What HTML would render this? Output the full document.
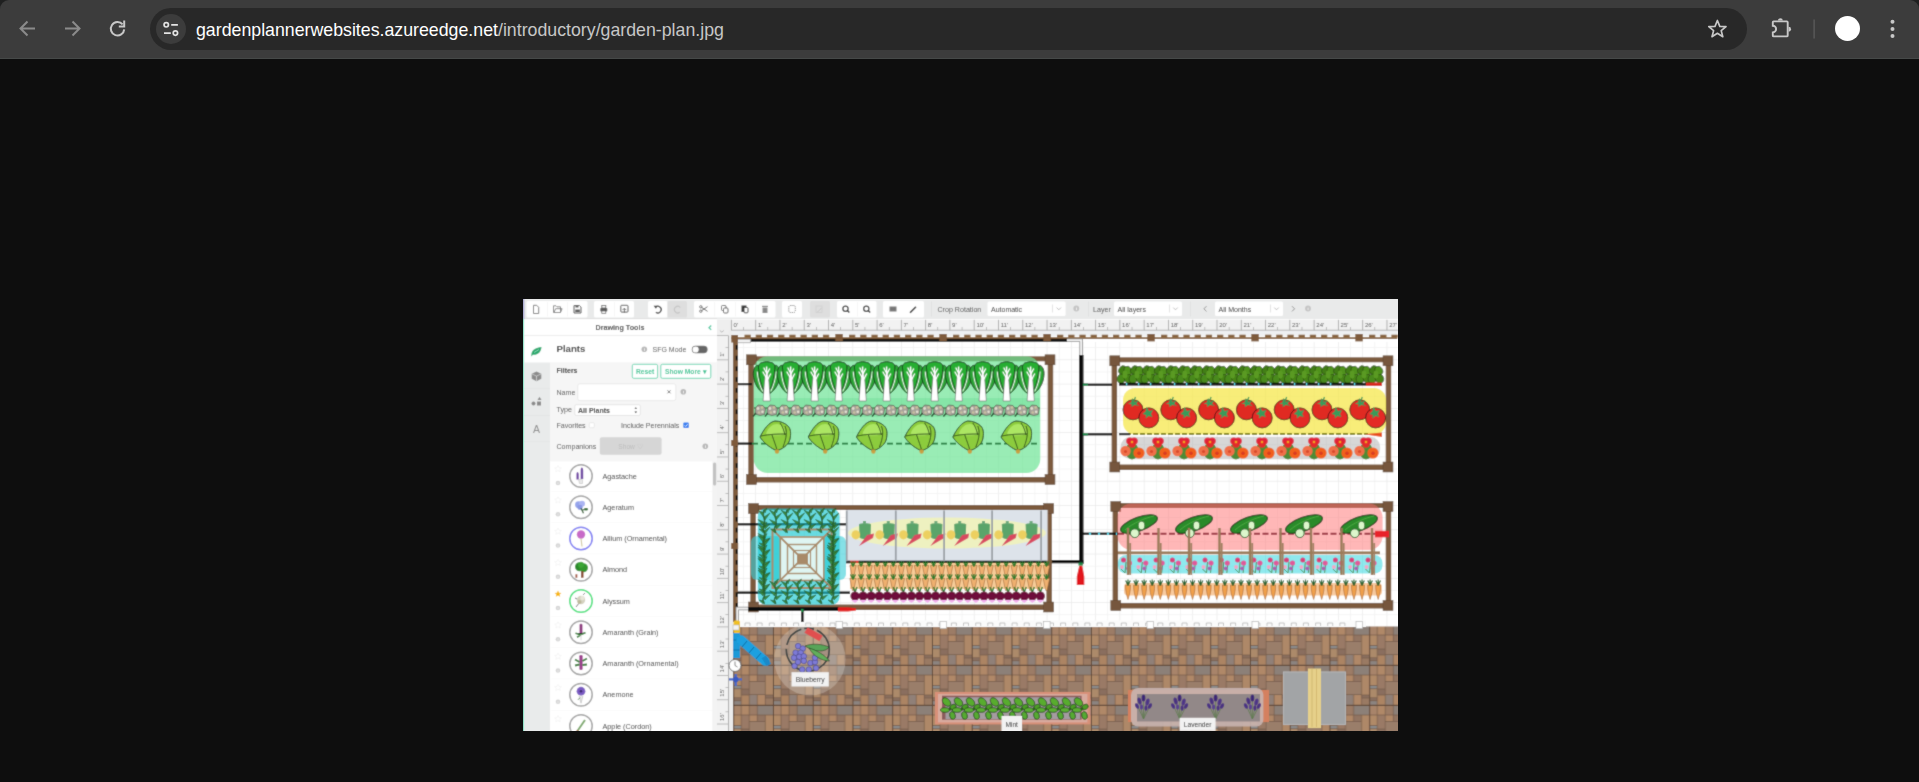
<!DOCTYPE html>
<html><head><meta charset="utf-8">
<style>
*{margin:0;padding:0;box-sizing:border-box}
html,body{width:1919px;height:782px;overflow:hidden;background:#0e0e0e;font-family:"Liberation Sans",sans-serif}
.abs{position:absolute}
#chrome{position:absolute;left:0;top:0;width:1919px;height:59px;background:#3c3c3c}
#omni{position:absolute;left:150px;top:8px;width:1597px;height:42px;border-radius:21px;background:#282828}
#url{position:absolute;left:196px;top:19.5px;font-size:17.75px;color:#fff;white-space:nowrap;letter-spacing:0}
#url span{color:#c7c7c7}
#img{position:absolute;left:523px;top:299px;width:875px;height:432px;background:#fff;overflow:hidden}

.t{position:absolute;white-space:nowrap;color:#333;font-size:8px}
</style></head><body>

<div id="chrome">
  <svg class="abs" style="left:0;top:0" width="1919" height="59">
    <path d="M0 0H9A9 9 0 0 0 0 9Z" fill="#1f2020"/>
    <path d="M1919 0H1910A9 9 0 0 1 1919 9Z" fill="#1f2020"/>
  </svg>
  <div id="omni"></div>
  <svg class="abs" style="left:0;top:0" width="1919" height="59">
    <!-- back -->
    <g stroke="#8b8b8b" stroke-width="2" fill="none">
      <path d="M20.5 28.5H35M27.5 21.5L20.5 28.5L27.5 35.5"/>
      <path d="M65 28.5H79.5M72.5 21.5L79.5 28.5L72.5 35.5"/>
    </g>
    <!-- reload -->
    <path d="M122.6 24.4A6.7 6.7 0 1 0 124.2 29.3" fill="none" stroke="#c8c8c8" stroke-width="2"/>
    <path d="M118.8 26.4H124.2V20.6" fill="none" stroke="#c8c8c8" stroke-width="2"/>
    <circle cx="171" cy="29" r="15" fill="#3c3c3c"/>
    <g stroke="#e3e3e3" stroke-width="1.7" fill="none">
      <circle cx="166.25" cy="24.8" r="2.2"/>
      <path d="M171.2 24.8H177.9M164 33.1H170.8"/>
      <circle cx="175.4" cy="33.1" r="2.2"/>
    </g>
    <!-- star -->
    <path d="M1717.4 20.5L1719.8 26.3L1726 26.6L1721.2 30.6L1722.8 36.7L1717.4 33.3L1712 36.7L1713.6 30.6L1708.8 26.6L1715 26.3Z" fill="none" stroke="#c8c8c8" stroke-width="1.7" stroke-linejoin="round"/>
    <!-- puzzle -->
    <path d="M1773.5 21.4H1786.8Q1787.7 21.4 1787.7 22.3V35.5Q1787.7 36.4 1786.8 36.4H1773.7Q1772.8 36.4 1772.8 35.5V32.4A3.3 3.3 0 0 0 1772.8 25.8V22.3Q1772.8 21.4 1773.5 21.4Z" fill="none" stroke="#c8c8c8" stroke-width="1.9"/>
    <path d="M1777.9 20.6A2.45 2.45 0 0 1 1782.8 20.6Z" fill="#c8c8c8"/>
    <path d="M1788.6 26.8A2.45 2.45 0 0 1 1788.6 31.7Z" fill="#c8c8c8"/>
    <rect x="1813.5" y="19.5" width="1.2" height="19" fill="#5f5f5f"/>
    <circle cx="1847.5" cy="28.5" r="12.5" fill="#fff"/>
    <g fill="#c8c8c8"><circle cx="1892.5" cy="21.8" r="2"/><circle cx="1892.5" cy="28.9" r="2"/><circle cx="1892.5" cy="35.9" r="2"/></g>
    <rect x="0" y="58" width="1919" height="1" fill="#464948"/>
  </svg>
  <div id="url">gardenplannerwebsites.azureedge.net<span>/introductory/garden-plan.jpg</span></div>
</div>


<div id="img">
<svg width="875" height="432" viewBox="523 299 875 432" style="position:absolute;left:0;top:0" font-family="Liberation Sans, sans-serif">
<filter id="soft" x="523" y="299" width="875" height="432" filterUnits="userSpaceOnUse"><feConvolveMatrix order="3" kernelMatrix="1 3 1 3 16 3 1 3 1" divisor="32" edgeMode="duplicate" preserveAlpha="true"/></filter>
<defs>
<g id="bok">
<path d="M-3 30C-8 27 -12 21 -13 14C-14 9 -13 4 -10 2C-7 1 -4 5 -3 11L-2 22Z" fill="#2aa236" stroke="#143a16" stroke-width="0.9"/>
<path d="M3 30C8 27 12 21 13 14C14 9 13 4 10 2C7 1 4 5 3 11L2 22Z" fill="#2aa236" stroke="#143a16" stroke-width="0.9"/>
<path d="M-8 6C-9 2 -7 -1 -4 -1C-2 -2 2 -2 4 -1C7 -1 9 2 8 6C8 12 6 20 4 25L-4 25C-6 20 -8 12 -8 6Z" fill="#26ae32" stroke="#143a16" stroke-width="0.9"/>
<path d="M-3.6 37.5C-3 30 -2.6 20 -1.5 12L0 7L1.5 12C2.6 20 3 30 3.6 37.5Z" fill="#fff" stroke="#555" stroke-width="0.5"/>
<path d="M0 15L-4 8M0 18L4 10M0 12L0 3M0 10L-3 4M0 11L3 5" stroke="#fff" stroke-width="1.3"/>
<path d="M-9.5 8C-9 15 -7 22 -4 28" stroke="#e6f4e6" stroke-width="1.1" fill="none"/>
<path d="M9.5 8C9 15 7 22 4 28" stroke="#e6f4e6" stroke-width="1.1" fill="none"/>
</g>
<g id="herb">
<path d="M-5 4L-4.5 -2L-2 -5L3 -4.5L5.5 -1L4.5 4.5L0 5.5Z" fill="#a6a29a" stroke="#4a5040" stroke-width="0.6"/>
<circle cx="-2" cy="-1.5" r="1.4" fill="#e0dccc"/><circle cx="2" cy="-2.5" r="1.3" fill="#ccc49a"/><circle cx="-1" cy="2.5" r="1.3" fill="#c8c0a0"/><circle cx="2.5" cy="1.8" r="1.3" fill="#e4e0d0"/>
<path d="M-7 6.5L-4 3" stroke="#24482a" stroke-width="1.3"/>
</g>
<g id="cab">
<path d="M-17 0C-13 -8 -8 -15 -2 -16C3 -16 8 -14 11 -11C14 -8 14 -3 13 2C12 7 7 11 2 13L-2 13C-8 10 -14 5 -17 0Z" fill="#8ccc3c" stroke="#22401a" stroke-width="1"/>
<path d="M-11 -3C-9 -10 -4 -13 0 -13C5 -13 8 -9 9 -3C3 -1 -5 -1 -11 -3Z" fill="#ace664"/>
<path d="M-16 -1C-8 -3 2 -3 9 -3M-5 -2C-3 4 -1 9 0 13M8 -11C10 -6 10 0 6 10M3 -14C6 -10 7 -6 8 -2" stroke="#2a4a18" stroke-width="0.9" fill="none"/>
<circle cx="0" cy="14.5" r="2.2" fill="#c8a040"/>
</g>
<g id="basil">
<ellipse cx="-3.5" cy="5" rx="4.2" ry="5" transform="rotate(25 -3.5 5)" fill="#4a8a1a" stroke="#203a0c" stroke-width="0.5"/>
<ellipse cx="3.5" cy="5" rx="4.2" ry="5" transform="rotate(-25 3.5 5)" fill="#468418" stroke="#203a0c" stroke-width="0.5"/>
<ellipse cx="-2.5" cy="-3.5" rx="3.6" ry="4.5" transform="rotate(30 -2.5 -3.5)" fill="#427e14" stroke="#203a0c" stroke-width="0.5"/>
<ellipse cx="3" cy="-3" rx="3.6" ry="4.5" transform="rotate(-30 3 -3)" fill="#50921e" stroke="#203a0c" stroke-width="0.5"/>
<ellipse cx="0" cy="1" rx="2.5" ry="4" fill="#5a9a22"/>
</g>
<g id="tom">
<circle cx="-7.5" cy="-2.2" r="10" fill="#e02a24" stroke="#4a1010" stroke-width="0.9"/>
<circle cx="8.3" cy="5.9" r="10" fill="#e42c26" stroke="#4a1010" stroke-width="0.9"/>
<path d="M-9.5 -9.5L-8 -14L-6 -10L-2 -12L-4 -8L-1 -6L-6 -7L-9 -5L-9 -8L-13 -8Z" fill="#3a9a5a"/>
<path d="M5 -0.5L6 -5L8.5 -1L12.5 -2L10.5 2L12 5L8 4L5 6.5L5.5 3L2 2Z" fill="#3a9a5a"/>
<path d="M-7 -10L-5 -15" stroke="#3a9a5a" stroke-width="1.2"/>
</g>
<g id="nas">
<ellipse cx="0" cy="4" rx="6.5" ry="8.5" fill="#4e8a34"/>
<circle cx="-2.2" cy="-6" r="3.6" fill="#e0203a"/><circle cx="2.2" cy="-6" r="3.6" fill="#e0203a"/><circle cx="0" cy="-3" r="3.8" fill="#e32a2a"/><circle cx="0" cy="-5" r="1.2" fill="#f0a020"/>
<circle cx="-6.5" cy="4" r="5.2" fill="#f0704a"/><circle cx="-6.5" cy="4.5" r="1.6" fill="#d84a2a"/>
<circle cx="7" cy="6" r="5.6" fill="#f2601e"/><circle cx="7" cy="6.3" r="1.8" fill="#d83a20"/>
</g>
<g id="car">
<path d="M-3.2 3L3.2 3L0.6 15L-0.6 15Z" fill="#f0b070" stroke="#8a5a2a" stroke-width="0.5"/>
<path d="M0 4L-2.5 -1M0 4L2.5 -1M0 4L0 -1.5" stroke="#2a7a2a" stroke-width="1.2"/>
</g>
<g id="car2">
<path d="M-2.4 5C-2.8 10 -1.2 16 0 19.5C1.2 16 2.8 10 2.4 5Z" fill="#f0a04c" stroke="#9a5a24" stroke-width="0.5"/>
<path d="M0 5.5L-2.3 0.5M0 5.5L2.3 0.5M0 5.5L0 -0.5" stroke="#24602a" stroke-width="1.2"/>
</g>
<g id="beet">
<path d="M-2 -4L0 1L2 -4" stroke="#2a7a2a" stroke-width="1.4" fill="none"/>
<circle cx="0" cy="5" r="4.6" fill="#6e0f3a"/>
<path d="M-4 9L4 9L0 12Z" fill="#f3b0ee"/>
</g>
<g id="cuc">
<ellipse cx="0" cy="-2" rx="19.5" ry="7" transform="rotate(-20 0 -2)" fill="#2a8a2a" stroke="#113a14" stroke-width="1"/>
<path d="M-14 4C-6 -3 6 -8 15 -10" stroke="#4aaa40" stroke-width="1" fill="none"/>
<ellipse cx="2.5" cy="-0.5" rx="3.2" ry="4.2" fill="#dcf7cc" stroke="#2a6a2a" stroke-width="0.8"/>
<circle cx="-4.2" cy="7.2" r="4.4" fill="#dcf7cc" stroke="#1e5a22" stroke-width="1"/>
</g>
<g id="flw">
<path d="M-1 9L0 -2M3 9L4 0M-1 9L-5 5" stroke="#4a8a4a" stroke-width="0.9"/>
<circle cx="-2.5" cy="-4" r="2.5" fill="#d8407a"/><circle cx="3.5" cy="-1" r="2.6" fill="#e0589a"/>
<circle cx="-4" cy="3" r="2" fill="#f3a6c6"/><circle cx="2" cy="4.5" r="2" fill="#a860b0"/>
</g>
<g id="mint">
<ellipse cx="-2.5" cy="-6" rx="5" ry="3.3" transform="rotate(45 -2.5 -6)" fill="#58ac2e" stroke="#1c3c14" stroke-width="0.7"/>
<ellipse cx="4" cy="-1" rx="3.5" ry="2.5" transform="rotate(-30 4 -1)" fill="#4e9e28" stroke="#1c3c14" stroke-width="0.7"/>
<ellipse cx="-4" cy="2" rx="4.6" ry="2.3" fill="#5cb032" stroke="#1c3c14" stroke-width="0.7"/>
<ellipse cx="3.5" cy="7.5" rx="2.8" ry="4" transform="rotate(-15 3.5 7.5)" fill="#56aa30" stroke="#1c3c14" stroke-width="0.7"/>
<circle cx="1" cy="1" r="1.5" fill="#2a5a1a"/>
</g>
<g id="lav">
<path d="M0 13L-4 -4M0 13L0 -7M0 13L4 -4M0 13L-6 0M0 13L6 1" stroke="#5a7a4a" stroke-width="0.7"/>
<ellipse cx="-4" cy="-5" rx="1.9" ry="3.6" transform="rotate(-15 -4 -5)" fill="#4a3080"/><ellipse cx="0" cy="-8" rx="1.9" ry="3.6" fill="#3e2876"/>
<ellipse cx="4" cy="-4" rx="1.9" ry="3.6" transform="rotate(15 4 -4)" fill="#4e3486"/><ellipse cx="-6.5" cy="0" rx="1.7" ry="3" transform="rotate(-25 -6.5 0)" fill="#4a3284"/>
<ellipse cx="6.5" cy="0" rx="1.7" ry="3" transform="rotate(25 6.5 0)" fill="#4a3080"/><ellipse cx="-2" cy="1" rx="1.6" ry="2.8" fill="#5a4090"/><ellipse cx="2.5" cy="2" rx="1.6" ry="2.8" fill="#4a3080"/>
</g>
<g id="bean">
<path d="M0 -11C-3 -5 3 -1 0 5C-3 9 1 10 0 12" stroke="#2a6630" stroke-width="1.5" fill="none"/>
<path d="M0 -8L-6 -11L-1 -4.5ZM0 -4L6 -8L1 -1ZM0 1L-6 -1.5L-1 4ZM0 5L6 3L1 8ZM0 9L-5 8L-1 11.5ZM0 -11L3 -13L1 -8Z" fill="#3a8a3c" stroke="#1e4e22" stroke-width="0.5"/>
</g>
<pattern id="pav" x="733.25" y="625" width="39.75" height="40" patternUnits="userSpaceOnUse"><rect width="40" height="40" fill="#745a48"/><rect x="0.35" y="0.35" width="7.3" height="9.3" fill="#a8846a"/><rect x="0.35" y="10.35" width="7.3" height="9.8" fill="#b08a68"/><rect x="0.35" y="20.85" width="7.3" height="2.5999999999999996" fill="#8a8a8a"/><rect x="0.35" y="24.150000000000002" width="7.3" height="8.3" fill="#ac8a6a"/><rect x="0.35" y="33.15" width="7.3" height="2.3" fill="#8a7060"/><rect x="0.35" y="36.15" width="7.3" height="3.5" fill="#8c8480"/><rect x="8.35" y="0.35" width="7.3" height="9.3" fill="#b08868"/><rect x="8.35" y="10.35" width="7.3" height="13.3" fill="#9a7a66"/><rect x="8.35" y="24.35" width="7.3" height="5.3" fill="#8a6e5e"/><rect x="8.35" y="30.35" width="7.3" height="9.3" fill="#ac8464"/><rect x="16.35" y="0.35" width="7.3" height="9.3" fill="#9c7c66"/><rect x="16.35" y="10.35" width="7.3" height="5.7" fill="#b08868"/><rect x="16.35" y="16.75" width="15.3" height="12.600000000000001" fill="#9a7e6a"/><rect x="16.35" y="30.05" width="7.3" height="9.600000000000001" fill="#908078"/><rect x="24.35" y="0.35" width="15.3" height="9.3" fill="#8c8078"/><rect x="24.35" y="10.35" width="7.3" height="5.7" fill="#927462"/><rect x="24.35" y="30.05" width="7.3" height="9.600000000000001" fill="#b08868"/><rect x="32.35" y="10.35" width="7.3" height="19.3" fill="#ae8868"/><rect x="32.35" y="30.35" width="7.3" height="2.3" fill="#8a6e5e"/><rect x="32.35" y="33.35" width="7.3" height="6.3" fill="#9a7a64"/><rect x="0" y="0" width="40" height="0.9" fill="#5e4636"/><rect x="0" y="0" width="0.9" height="40" fill="#5e4636"/></pattern>
</defs>
<g filter="url(#soft)">
<rect x="523" y="299" width="875" height="20" fill="#e9eaea"/>
<rect x="523" y="318.3" width="194" height="1" fill="#dcdcdc"/>
<rect x="526.5" y="301" width="61.0" height="16.5" rx="1.5" fill="#fff"/>
<rect x="594" y="301" width="40" height="16.5" rx="1.5" fill="#fff"/>
<rect x="648" y="301" width="19.5" height="16.5" rx="1.5" fill="#fff"/>
<rect x="667.5" y="301" width="19.5" height="16.5" rx="1.5" fill="#dedede"/>
<rect x="694" y="301" width="81.5" height="16.5" rx="1.5" fill="#fff"/>
<rect x="782" y="301" width="20" height="16.5" rx="1.5" fill="#fff"/>
<rect x="810" y="301" width="20" height="16.5" rx="1.5" fill="#dedede"/>
<rect x="837" y="301" width="39.5" height="16.5" rx="1.5" fill="#fff"/>
<rect x="883" y="301" width="41" height="16.5" rx="1.5" fill="#fff"/>
<rect x="547" y="302" width="0.6" height="14.5" fill="#f0f0f0"/>
<rect x="567" y="302" width="0.6" height="14.5" fill="#f0f0f0"/>
<rect x="614" y="302" width="0.6" height="14.5" fill="#f0f0f0"/>
<rect x="714.5" y="302" width="0.6" height="14.5" fill="#f0f0f0"/>
<rect x="735" y="302" width="0.6" height="14.5" fill="#f0f0f0"/>
<rect x="755" y="302" width="0.6" height="14.5" fill="#f0f0f0"/>
<rect x="857" y="302" width="0.6" height="14.5" fill="#f0f0f0"/>
<path d="M533.5 305.3h3.2l2 2v6.2h-5.2z" fill="none" stroke="#7a7a7a" stroke-width="1"/>
<path d="M553.5 305.8h2.5l1 1h3.5v5.7h-7zM554 312.5l1.6-3.8h6.5l-1.6 3.8" fill="none" stroke="#7a7a7a" stroke-width="0.9"/>
<path d="M574 305.5h5.5l1.5 1.5v6h-7z" fill="none" stroke="#5a5a5a" stroke-width="1"/><rect x="575.5" y="305.5" width="3" height="2" fill="#5a5a5a"/><rect x="575.3" y="309.5" width="4.5" height="2.5" fill="#5a5a5a"/>
<rect x="600.3" y="308" width="7" height="3.5" rx="0.8" fill="#5a5a5a"/><rect x="601.8" y="305.5" width="4" height="2.5" fill="none" stroke="#5a5a5a" stroke-width="0.8"/><rect x="601.8" y="311" width="4" height="2.3" fill="#fff" stroke="#5a5a5a" stroke-width="0.7"/>
<rect x="620.8" y="305.3" width="7.2" height="6.8" rx="0.8" fill="none" stroke="#5a5a5a" stroke-width="1"/><path d="M624.4 312.8v-4.5M622.6 310l1.8-1.8 1.8 1.8" stroke="#5a5a5a" stroke-width="0.9" fill="none"/>
<path d="M655.3 307.5a3.3 3.3 0 1 1 0.6 4.8" fill="none" stroke="#333" stroke-width="1.3"/><path d="M653.6 305.8l2.4 3 1.2-3z" fill="#333"/>
<path d="M680.3 307.5a3.3 3.3 0 1 0 -0.6 4.8" fill="none" stroke="#c4c4c4" stroke-width="1.1"/>
<path d="M701.5 307.3l6 4M701.5 310.7l6-4" stroke="#555" stroke-width="0.9"/><circle cx="700.8" cy="306.8" r="1.2" fill="none" stroke="#555" stroke-width="0.8"/><circle cx="700.8" cy="311.2" r="1.2" fill="none" stroke="#555" stroke-width="0.8"/>
<rect x="721.5" y="305.5" width="4.5" height="5" rx="1" fill="none" stroke="#5a5a5a" stroke-width="0.9"/><rect x="723.5" y="308" width="4.5" height="5" rx="1" fill="#fff" stroke="#5a5a5a" stroke-width="0.9"/>
<rect x="741.5" y="305.5" width="5" height="6.5" fill="#333"/><rect x="744" y="307.5" width="4" height="5.3" rx="0.8" fill="#fff" stroke="#333" stroke-width="0.9"/>
<path d="M762.5 307.5h5v5.5h-5z" fill="#888"/><rect x="762" y="305.8" width="6" height="1.2" fill="#888"/>
<rect x="788.8" y="305.5" width="6.5" height="7" rx="1.5" fill="none" stroke="#777" stroke-width="0.9" stroke-dasharray="1.2 0.9"/>
<path d="M817 312.5l4.5-4.5" stroke="#c8c8c8" stroke-width="1"/><rect x="816" y="306" width="6" height="6.5" fill="none" stroke="#cfcfcf" stroke-width="0.7"/>
<circle cx="845.5" cy="308.8" r="2.6" fill="none" stroke="#333" stroke-width="1.2"/><path d="M847.3 310.6l2 2" stroke="#333" stroke-width="1.4"/>
<circle cx="866.3" cy="308.8" r="2.6" fill="none" stroke="#333" stroke-width="1.2"/><path d="M868.0999999999999 310.6l2 2" stroke="#333" stroke-width="1.4"/>
<rect x="889.5" y="306.5" width="7" height="5" fill="#777"/>
<path d="M910.5 312.3l5-5" stroke="#222" stroke-width="1.6" stroke-linecap="round"/>
<rect x="931" y="301.5" width="0.7" height="15" fill="#dddddd"/>
<rect x="1088" y="301.5" width="0.7" height="15" fill="#dddddd"/>
<rect x="1190" y="301.5" width="0.7" height="15" fill="#dddddd"/>
<text x="937.5" y="311.8" font-size="7.1" fill="#555" text-anchor="start" font-weight="normal">Crop Rotation</text>
<rect x="987.5" y="301.5" width="78.09999999999991" height="14.5" rx="1.5" fill="#fff"/>
<text x="991.0" y="311.8" font-size="7.0" fill="#333" text-anchor="start" font-weight="normal">Automatic</text>
<rect x="1052" y="304.5" width="0.6" height="8" fill="#d0d0d0"/>
<path d="M1056.6 307.6l2.2 2.2 2.2-2.2" fill="none" stroke="#aaa" stroke-width="0.8"/>
<circle cx="1076.3" cy="308.5" r="2.9" fill="#c4c4c4"/><rect x="1076" y="307.5" width="0.7" height="2.6" fill="#fff"/>
<text x="1093" y="311.8" font-size="7.1" fill="#555" text-anchor="start" font-weight="normal">Layer</text>
<rect x="1114" y="301.5" width="68" height="14.5" rx="1.5" fill="#fff"/>
<text x="1117.5" y="311.8" font-size="7.0" fill="#333" text-anchor="start" font-weight="normal">All layers</text>
<rect x="1169" y="304.5" width="0.6" height="8" fill="#d0d0d0"/>
<path d="M1173.3 307.6l2.2 2.2 2.2-2.2" fill="none" stroke="#aaa" stroke-width="0.8"/>
<path d="M1206.5 306.2l-2.6 2.6 2.6 2.6" fill="none" stroke="#888" stroke-width="0.9"/>
<rect x="1215" y="301.5" width="68" height="14.5" rx="1.5" fill="#fff"/>
<text x="1218.5" y="311.8" font-size="7.0" fill="#333" text-anchor="start" font-weight="normal">All Months</text>
<rect x="1270" y="304.5" width="0.6" height="8" fill="#d0d0d0"/>
<path d="M1274.3 307.6l2.2 2.2 2.2-2.2" fill="none" stroke="#aaa" stroke-width="0.8"/>
<path d="M1292 306.2l2.6 2.6-2.6 2.6" fill="none" stroke="#888" stroke-width="0.9"/>
<circle cx="1308" cy="308.5" r="2.9" fill="#c4c4c4"/><rect x="1307.7" y="307.5" width="0.7" height="2.6" fill="#fff"/>
<rect x="523" y="299" width="1.3" height="20" fill="#a6a6cf"/>
<rect x="523" y="319" width="1.3" height="412" fill="#7fe0c2"/>
<rect x="524.3" y="319.3" width="192.7" height="16.5" fill="#fff"/>
<rect x="524.3" y="335.3" width="192.7" height="0.8" fill="#e6e6e6"/>
<text x="620" y="330.2" font-size="7.2" fill="#444" text-anchor="middle" font-weight="bold">Drawing Tools</text>
<path d="M711.2 325.5l-2.2 2.2 2.2 2.2" fill="none" stroke="#4cc9a0" stroke-width="1.3"/>
<rect x="524.3" y="336" width="25.7" height="395" fill="#e9ebeb"/>
<rect x="524.3" y="336" width="25.7" height="26.5" fill="#fff"/>
<rect x="524.3" y="388.5" width="25.7" height="0.6" fill="#dfe1e1"/>
<rect x="524.3" y="415" width="25.7" height="0.6" fill="#dfe1e1"/>
<rect x="524.3" y="441.5" width="25.7" height="0.6" fill="#dfe1e1"/>
<path d="M531.5 353.5c1-4 4.5-6 10-6.5c-0.5 5-3 8-8.5 7.8l-1.8 1.6z" fill="#22a86c"/><path d="M534 352.5l5-3" stroke="#fff" stroke-width="0.5"/>
<path d="M536.5 371.5l4.8 2.3v5l-4.8 2.4-4.8-2.4v-5z" fill="#8a8a8a"/><path d="M531.7 373.8l4.8 2.3 4.8-2.3M536.5 376.1v5" stroke="#e9ebeb" stroke-width="0.6" fill="none"/>
<circle cx="533.5" cy="403.5" r="2" fill="#8a8a8a"/><rect x="537" y="401.5" width="4" height="4" fill="#8a8a8a"/><path d="M537.5 400l2-3.2 2 3.2z" fill="#8a8a8a"/>
<text x="536.5" y="433" font-size="10.5" fill="#8a8a8a" text-anchor="middle" font-weight="normal">A</text>
<rect x="550" y="336" width="167" height="395" fill="#fff"/>
<rect x="550" y="362.3" width="167" height="99" fill="#f6f6f6"/>
<text x="556.5" y="352.3" font-size="9.6" fill="#333" text-anchor="start" font-weight="bold">Plants</text>
<circle cx="644.3" cy="349.3" r="2.8" fill="#b8b8b8"/><rect x="644" y="348.3" width="0.7" height="2.6" fill="#fff"/>
<text x="652.5" y="352" font-size="7.0" fill="#555" text-anchor="start" font-weight="normal">SFG Mode</text>
<rect x="691.8" y="345.8" width="15.8" height="7.4" rx="3.7" fill="#666"/><circle cx="695.6" cy="349.5" r="3.1" fill="#fff"/>
<text x="556.5" y="373.2" font-size="7" fill="#333" text-anchor="start" font-weight="bold">Filters</text>
<rect x="632.3" y="364.3" width="25.3" height="14" rx="1.5" fill="#fff" stroke="#5fd3aa" stroke-width="0.9"/>
<text x="645" y="374" font-size="6.7" fill="#3ec596" text-anchor="middle" font-weight="bold">Reset</text>
<rect x="660.8" y="364.3" width="50" height="14" rx="1.5" fill="#fff" stroke="#5fd3aa" stroke-width="0.9"/>
<text x="685.8" y="374" font-size="6.7" fill="#3ec596" text-anchor="middle" font-weight="bold">Show More ▾</text>
<text x="556.5" y="394.5" font-size="7.1" fill="#555" text-anchor="start" font-weight="normal">Name</text>
<rect x="577.8" y="383.8" width="98" height="16.8" rx="2" fill="#fff" stroke="#e4e4e4" stroke-width="0.7"/>
<path d="M667.5 390.3l3 3M670.5 390.3l-3 3" stroke="#666" stroke-width="0.9"/>
<circle cx="683.3" cy="391.8" r="2.8" fill="#b8b8b8"/><rect x="683" y="390.8" width="0.7" height="2.6" fill="#fff"/>
<text x="556.5" y="412.3" font-size="7.1" fill="#555" text-anchor="start" font-weight="normal">Type</text>
<rect x="574.8" y="404.7" width="65.5" height="10.8" rx="1.5" fill="#fff" stroke="#dcdcdc" stroke-width="0.7"/>
<text x="578" y="412.6" font-size="7.0" fill="#333" text-anchor="start" font-weight="bold">All Plants</text>
<path d="M634.5 408.8l1.3-1.6 1.3 1.6zM634.5 411.6l1.3 1.6 1.3-1.6z" fill="#333"/>
<text x="556.5" y="427.8" font-size="7.1" fill="#555" text-anchor="start" font-weight="normal">Favorites</text>
<rect x="589.3" y="422.7" width="5" height="5" rx="1" fill="#fff" stroke="#ddd" stroke-width="0.6"/>
<text x="621" y="427.8" font-size="7.1" fill="#555" text-anchor="start" font-weight="normal">Include Perennials</text>
<rect x="683.3" y="422.5" width="5.5" height="5.5" rx="1" fill="#2e7cf0"/><path d="M684.5 425.3l1.2 1.2 2-2.3" stroke="#fff" stroke-width="0.8" fill="none"/>
<text x="556.5" y="448.5" font-size="7.1" fill="#555" text-anchor="start" font-weight="normal">Companions</text>
<rect x="599.8" y="437.3" width="61.8" height="17.5" rx="2" fill="#d6d6d6"/>
<text x="630.5" y="448.5" font-size="6.6" fill="#bdbdbd" text-anchor="middle" font-weight="normal">Show ♡</text>
<circle cx="705.3" cy="446.3" r="2.8" fill="#b8b8b8"/><rect x="705" y="445.3" width="0.7" height="2.6" fill="#fff"/>
<rect x="712.3" y="461.3" width="4.7" height="270" fill="#f3f3f3"/>
<rect x="713" y="462.5" width="3.2" height="23" rx="1.6" fill="#c2c2c2"/>
<rect x="551" y="491.20" width="161" height="0.5" fill="#f7f7f7"/>
<circle cx="581" cy="476.00" r="11.2" fill="#fff" stroke="#a4a4a4" stroke-width="1.5"/>
<text x="602.5" y="478.6" font-size="7.25" fill="#444" text-anchor="start" font-weight="normal">Agastache</text>
<path d="M558 465.50l1 2.2 2.4 0.2-1.8 1.6 0.6 2.3-2.2-1.3-2.2 1.3 0.6-2.3-1.8-1.6 2.4-0.2z" fill="none" stroke="#ededed" stroke-width="0.5"/>
<circle cx="558" cy="483.00" r="2.3" fill="#d4d4d4"/><rect x="557.7" y="482.20" width="0.6" height="2" fill="#fff"/>
<rect x="551" y="522.45" width="161" height="0.5" fill="#f7f7f7"/>
<circle cx="581" cy="507.25" r="11.2" fill="#fff" stroke="#a4a4a4" stroke-width="1.5"/>
<text x="602.5" y="509.85" font-size="7.25" fill="#444" text-anchor="start" font-weight="normal">Ageratum</text>
<path d="M558 496.75l1 2.2 2.4 0.2-1.8 1.6 0.6 2.3-2.2-1.3-2.2 1.3 0.6-2.3-1.8-1.6 2.4-0.2z" fill="none" stroke="#ededed" stroke-width="0.5"/>
<circle cx="558" cy="514.25" r="2.3" fill="#d4d4d4"/><rect x="557.7" y="513.45" width="0.6" height="2" fill="#fff"/>
<rect x="551" y="553.70" width="161" height="0.5" fill="#f7f7f7"/>
<circle cx="581" cy="538.50" r="11.2" fill="#fff" stroke="#7d7cf2" stroke-width="1.5"/>
<text x="602.5" y="541.1" font-size="7.25" fill="#444" text-anchor="start" font-weight="normal">Allium (Ornamental)</text>
<path d="M558 528.00l1 2.2 2.4 0.2-1.8 1.6 0.6 2.3-2.2-1.3-2.2 1.3 0.6-2.3-1.8-1.6 2.4-0.2z" fill="none" stroke="#ededed" stroke-width="0.5"/>
<circle cx="558" cy="545.50" r="2.3" fill="#d4d4d4"/><rect x="557.7" y="544.70" width="0.6" height="2" fill="#fff"/>
<rect x="551" y="584.95" width="161" height="0.5" fill="#f7f7f7"/>
<circle cx="581" cy="569.75" r="11.2" fill="#fff" stroke="#a4a4a4" stroke-width="1.5"/>
<text x="602.5" y="572.35" font-size="7.25" fill="#444" text-anchor="start" font-weight="normal">Almond</text>
<path d="M558 559.25l1 2.2 2.4 0.2-1.8 1.6 0.6 2.3-2.2-1.3-2.2 1.3 0.6-2.3-1.8-1.6 2.4-0.2z" fill="none" stroke="#ededed" stroke-width="0.5"/>
<circle cx="558" cy="576.75" r="2.3" fill="#d4d4d4"/><rect x="557.7" y="575.95" width="0.6" height="2" fill="#fff"/>
<rect x="551" y="616.20" width="161" height="0.5" fill="#f7f7f7"/>
<circle cx="581" cy="601.00" r="11.2" fill="#fff" stroke="#45e07a" stroke-width="1.5"/>
<text x="602.5" y="603.6" font-size="7.25" fill="#444" text-anchor="start" font-weight="normal">Alyssum</text>
<path d="M558 590.50l1 2.2 2.4 0.2-1.8 1.6 0.6 2.3-2.2-1.3-2.2 1.3 0.6-2.3-1.8-1.6 2.4-0.2z" fill="#f7b500"/>
<circle cx="558" cy="608.00" r="2.3" fill="#d4d4d4"/><rect x="557.7" y="607.20" width="0.6" height="2" fill="#fff"/>
<rect x="551" y="647.45" width="161" height="0.5" fill="#f7f7f7"/>
<circle cx="581" cy="632.25" r="11.2" fill="#fff" stroke="#a4a4a4" stroke-width="1.5"/>
<text x="602.5" y="634.85" font-size="7.25" fill="#444" text-anchor="start" font-weight="normal">Amaranth (Grain)</text>
<path d="M558 621.75l1 2.2 2.4 0.2-1.8 1.6 0.6 2.3-2.2-1.3-2.2 1.3 0.6-2.3-1.8-1.6 2.4-0.2z" fill="none" stroke="#ededed" stroke-width="0.5"/>
<circle cx="558" cy="639.25" r="2.3" fill="#d4d4d4"/><rect x="557.7" y="638.45" width="0.6" height="2" fill="#fff"/>
<rect x="551" y="678.70" width="161" height="0.5" fill="#f7f7f7"/>
<circle cx="581" cy="663.50" r="11.2" fill="#fff" stroke="#a4a4a4" stroke-width="1.5"/>
<text x="602.5" y="666.1" font-size="7.25" fill="#444" text-anchor="start" font-weight="normal">Amaranth (Ornamental)</text>
<path d="M558 653.00l1 2.2 2.4 0.2-1.8 1.6 0.6 2.3-2.2-1.3-2.2 1.3 0.6-2.3-1.8-1.6 2.4-0.2z" fill="none" stroke="#ededed" stroke-width="0.5"/>
<circle cx="558" cy="670.50" r="2.3" fill="#d4d4d4"/><rect x="557.7" y="669.70" width="0.6" height="2" fill="#fff"/>
<rect x="551" y="709.95" width="161" height="0.5" fill="#f7f7f7"/>
<circle cx="581" cy="694.75" r="11.2" fill="#fff" stroke="#a4a4a4" stroke-width="1.5"/>
<text x="602.5" y="697.35" font-size="7.25" fill="#444" text-anchor="start" font-weight="normal">Anemone</text>
<path d="M558 684.25l1 2.2 2.4 0.2-1.8 1.6 0.6 2.3-2.2-1.3-2.2 1.3 0.6-2.3-1.8-1.6 2.4-0.2z" fill="none" stroke="#ededed" stroke-width="0.5"/>
<circle cx="558" cy="701.75" r="2.3" fill="#d4d4d4"/><rect x="557.7" y="700.95" width="0.6" height="2" fill="#fff"/>
<rect x="551" y="741.20" width="161" height="0.5" fill="#f7f7f7"/>
<circle cx="581" cy="726.00" r="11.2" fill="#fff" stroke="#a4a4a4" stroke-width="1.5"/>
<text x="602.5" y="728.6" font-size="7.25" fill="#444" text-anchor="start" font-weight="normal">Apple (Cordon)</text>
<path d="M558 715.50l1 2.2 2.4 0.2-1.8 1.6 0.6 2.3-2.2-1.3-2.2 1.3 0.6-2.3-1.8-1.6 2.4-0.2z" fill="none" stroke="#ededed" stroke-width="0.5"/>
<circle cx="558" cy="733.00" r="2.3" fill="#d4d4d4"/><rect x="557.7" y="732.20" width="0.6" height="2" fill="#fff"/>
<g transform="translate(581 476.00)"><path d="M-3.5 -4c0.6 0 1.2 1 1.2 2.5v5h-2.2v-5c0-1.5 0.4-2.5 1-2.5zM0.8 -8.5c0.8 0 1.4 1.2 1.4 3v8.5h-2.5v-8.5c0-1.8 0.4-3 1.1-3z" fill="#6a3aa0"/><path d="M-2.5 3.5h4v4h-3z" fill="#e8e8e8" stroke="#aaa" stroke-width="0.4"/></g>
<g transform="translate(581 507.25)"><circle cx="-2.5" cy="-2.5" r="3.4" fill="#95a4ec"/><circle cx="1" cy="-3.5" r="3" fill="#aab4f2"/><circle cx="-1" cy="0" r="2.6" fill="#8a98e4"/><path d="M0 1l2.5 5M1 3l5 -1.5" stroke="#2a5a2a" stroke-width="1.3"/><ellipse cx="5" cy="2" rx="2.2" ry="1.2" fill="#2a6a2a"/></g>
<g transform="translate(581 538.50)"><circle cx="0" cy="-4" r="4.2" fill="#c86ac8"/><path d="M0 0l1 8" stroke="#d0c8a0" stroke-width="1.1"/></g>
<g transform="translate(581 569.75)"><circle cx="-1.5" cy="-3" r="4.5" fill="#2a8a2a"/><circle cx="2.5" cy="-2" r="4.5" fill="#32962e"/><circle cx="0" cy="-5" r="3" fill="#3aa636"/><rect x="0" y="1.5" width="2.5" height="6.5" fill="#8a4a2a"/><rect x="-5.5" y="4.5" width="1.8" height="3.5" fill="#a04a30"/></g>
<g transform="translate(581 601.00)"><path d="M-5 6l7 -9" stroke="#777" stroke-width="1"/><circle cx="0" cy="-1" r="4.2" fill="#d4d2c0"/><circle cx="1.5" cy="-3" r="2.2" fill="#e8e6da"/><circle cx="-1.5" cy="1" r="2" fill="#bdb89a"/><path d="M2 -6l2 -2M-4 -2l-2 -1" stroke="#555" stroke-width="0.8"/></g>
<g transform="translate(581 632.25)"><rect x="-1.4" y="-8.5" width="2.8" height="10" rx="1.2" fill="#8a2a7a"/><path d="M-5.5 1l5 1.5 5-2M-4 5l4-2.5" stroke="#2e7a2e" stroke-width="1.5"/><path d="M0 2v6" stroke="#ccc" stroke-width="0.8"/></g>
<g transform="translate(581 663.50)"><rect x="-1.6" y="-8.5" width="3.2" height="15" rx="1.2" fill="#9a3a8a"/><path d="M-6 -4l4.5 2.5M6 -5l-4.5 2.5M-6 2l4.5 -1M6 1l-4.5 0.5" stroke="#2e7a2e" stroke-width="1.8"/></g>
<g transform="translate(581 694.75)"><circle cx="0" cy="-3.5" r="4.4" fill="#7a5ac2"/><circle cx="0" cy="-3.5" r="1.3" fill="#3a2a6a"/><path d="M-2 1l2 7.5 2-7.5" fill="#e8e8e8" stroke="#999" stroke-width="0.4"/><path d="M-1 3l-2 2" stroke="#3a7a3a" stroke-width="0.9"/></g>
<g transform="translate(581 726.00)"><path d="M-5 7l9 -13" stroke="#7aa86a" stroke-width="2"/><circle cx="-3.5" cy="7" r="2.4" fill="#d42020"/></g>
<rect x="717" y="319.3" width="681" height="412" fill="#fff"/>
<rect x="731.05" y="342" width="0.7" height="290" fill="#e9e9e9"/><rect x="743.19" y="342" width="0.7" height="290" fill="#f1f1f1"/><rect x="755.33" y="342" width="0.7" height="290" fill="#e9e9e9"/><rect x="767.47" y="342" width="0.7" height="290" fill="#f1f1f1"/><rect x="779.61" y="342" width="0.7" height="290" fill="#e9e9e9"/><rect x="791.75" y="342" width="0.7" height="290" fill="#f1f1f1"/><rect x="803.89" y="342" width="0.7" height="290" fill="#e9e9e9"/><rect x="816.03" y="342" width="0.7" height="290" fill="#f1f1f1"/><rect x="828.17" y="342" width="0.7" height="290" fill="#e9e9e9"/><rect x="840.31" y="342" width="0.7" height="290" fill="#f1f1f1"/><rect x="852.45" y="342" width="0.7" height="290" fill="#e9e9e9"/><rect x="864.59" y="342" width="0.7" height="290" fill="#f1f1f1"/><rect x="876.73" y="342" width="0.7" height="290" fill="#e9e9e9"/><rect x="888.87" y="342" width="0.7" height="290" fill="#f1f1f1"/><rect x="901.01" y="342" width="0.7" height="290" fill="#e9e9e9"/><rect x="913.15" y="342" width="0.7" height="290" fill="#f1f1f1"/><rect x="925.29" y="342" width="0.7" height="290" fill="#e9e9e9"/><rect x="937.43" y="342" width="0.7" height="290" fill="#f1f1f1"/><rect x="949.57" y="342" width="0.7" height="290" fill="#e9e9e9"/><rect x="961.71" y="342" width="0.7" height="290" fill="#f1f1f1"/><rect x="973.85" y="342" width="0.7" height="290" fill="#e9e9e9"/><rect x="985.99" y="342" width="0.7" height="290" fill="#f1f1f1"/><rect x="998.13" y="342" width="0.7" height="290" fill="#e9e9e9"/><rect x="1010.27" y="342" width="0.7" height="290" fill="#f1f1f1"/><rect x="1022.41" y="342" width="0.7" height="290" fill="#e9e9e9"/><rect x="1034.55" y="342" width="0.7" height="290" fill="#f1f1f1"/><rect x="1046.69" y="342" width="0.7" height="290" fill="#e9e9e9"/><rect x="1058.83" y="342" width="0.7" height="290" fill="#f1f1f1"/><rect x="1070.97" y="342" width="0.7" height="290" fill="#e9e9e9"/><rect x="1083.11" y="342" width="0.7" height="290" fill="#f1f1f1"/><rect x="1095.25" y="342" width="0.7" height="290" fill="#e9e9e9"/><rect x="1107.39" y="342" width="0.7" height="290" fill="#f1f1f1"/><rect x="1119.53" y="342" width="0.7" height="290" fill="#e9e9e9"/><rect x="1131.67" y="342" width="0.7" height="290" fill="#f1f1f1"/><rect x="1143.81" y="342" width="0.7" height="290" fill="#e9e9e9"/><rect x="1155.95" y="342" width="0.7" height="290" fill="#f1f1f1"/><rect x="1168.09" y="342" width="0.7" height="290" fill="#e9e9e9"/><rect x="1180.23" y="342" width="0.7" height="290" fill="#f1f1f1"/><rect x="1192.37" y="342" width="0.7" height="290" fill="#e9e9e9"/><rect x="1204.51" y="342" width="0.7" height="290" fill="#f1f1f1"/><rect x="1216.65" y="342" width="0.7" height="290" fill="#e9e9e9"/><rect x="1228.79" y="342" width="0.7" height="290" fill="#f1f1f1"/><rect x="1240.93" y="342" width="0.7" height="290" fill="#e9e9e9"/><rect x="1253.07" y="342" width="0.7" height="290" fill="#f1f1f1"/><rect x="1265.21" y="342" width="0.7" height="290" fill="#e9e9e9"/><rect x="1277.35" y="342" width="0.7" height="290" fill="#f1f1f1"/><rect x="1289.49" y="342" width="0.7" height="290" fill="#e9e9e9"/><rect x="1301.63" y="342" width="0.7" height="290" fill="#f1f1f1"/><rect x="1313.77" y="342" width="0.7" height="290" fill="#e9e9e9"/><rect x="1325.91" y="342" width="0.7" height="290" fill="#f1f1f1"/><rect x="1338.05" y="342" width="0.7" height="290" fill="#e9e9e9"/><rect x="1350.19" y="342" width="0.7" height="290" fill="#f1f1f1"/><rect x="1362.33" y="342" width="0.7" height="290" fill="#e9e9e9"/><rect x="1374.47" y="342" width="0.7" height="290" fill="#f1f1f1"/><rect x="1386.61" y="342" width="0.7" height="290" fill="#e9e9e9"/><rect x="738" y="335.15" width="660" height="0.7" fill="#e9e9e9"/><rect x="738" y="347.29" width="660" height="0.7" fill="#f1f1f1"/><rect x="738" y="359.43" width="660" height="0.7" fill="#e9e9e9"/><rect x="738" y="371.57" width="660" height="0.7" fill="#f1f1f1"/><rect x="738" y="383.71" width="660" height="0.7" fill="#e9e9e9"/><rect x="738" y="395.85" width="660" height="0.7" fill="#f1f1f1"/><rect x="738" y="407.99" width="660" height="0.7" fill="#e9e9e9"/><rect x="738" y="420.13" width="660" height="0.7" fill="#f1f1f1"/><rect x="738" y="432.27" width="660" height="0.7" fill="#e9e9e9"/><rect x="738" y="444.41" width="660" height="0.7" fill="#f1f1f1"/><rect x="738" y="456.55" width="660" height="0.7" fill="#e9e9e9"/><rect x="738" y="468.69" width="660" height="0.7" fill="#f1f1f1"/><rect x="738" y="480.83" width="660" height="0.7" fill="#e9e9e9"/><rect x="738" y="492.97" width="660" height="0.7" fill="#f1f1f1"/><rect x="738" y="505.11" width="660" height="0.7" fill="#e9e9e9"/><rect x="738" y="517.25" width="660" height="0.7" fill="#f1f1f1"/><rect x="738" y="529.39" width="660" height="0.7" fill="#e9e9e9"/><rect x="738" y="541.53" width="660" height="0.7" fill="#f1f1f1"/><rect x="738" y="553.67" width="660" height="0.7" fill="#e9e9e9"/><rect x="738" y="565.81" width="660" height="0.7" fill="#f1f1f1"/><rect x="738" y="577.95" width="660" height="0.7" fill="#e9e9e9"/><rect x="738" y="590.09" width="660" height="0.7" fill="#f1f1f1"/><rect x="738" y="602.23" width="660" height="0.7" fill="#e9e9e9"/><rect x="738" y="614.37" width="660" height="0.7" fill="#f1f1f1"/><rect x="738" y="626.51" width="660" height="0.7" fill="#e9e9e9"/><rect x="738" y="638.65" width="660" height="0.7" fill="#f1f1f1"/><rect x="738" y="650.79" width="660" height="0.7" fill="#e9e9e9"/><rect x="738" y="662.93" width="660" height="0.7" fill="#f1f1f1"/><rect x="738" y="675.07" width="660" height="0.7" fill="#e9e9e9"/><rect x="738" y="687.21" width="660" height="0.7" fill="#f1f1f1"/><rect x="738" y="699.35" width="660" height="0.7" fill="#e9e9e9"/><rect x="738" y="711.49" width="660" height="0.7" fill="#f1f1f1"/><rect x="738" y="723.63" width="660" height="0.7" fill="#e9e9e9"/>
<rect x="717" y="319.3" width="14.4" height="16.5" fill="#efefef"/>
<path d="M719.8 330.5l2 1.6 2-1.6" fill="none" stroke="#aaa" stroke-width="0.8"/>
<rect x="717" y="335.8" width="11.6" height="396" fill="#f2f2f2"/>
<rect x="728.2" y="335.8" width="0.9" height="396" fill="#9a9a9a"/>
<rect x="729.1" y="330.3" width="4" height="402" fill="#ececec"/>
<rect x="717" y="335.10" width="11.6" height="0.9" fill="#b4b4b4"/><rect x="725.5" y="347.34" width="3" height="0.6" fill="#999"/><rect x="717" y="359.38" width="11.6" height="0.9" fill="#b4b4b4"/><rect x="725.5" y="371.62" width="3" height="0.6" fill="#999"/><text transform="translate(723.6 356.78) rotate(-90)" font-size="6" fill="#555">1'</text><rect x="717" y="383.66" width="11.6" height="0.9" fill="#b4b4b4"/><rect x="725.5" y="395.90" width="3" height="0.6" fill="#999"/><text transform="translate(723.6 381.06) rotate(-90)" font-size="6" fill="#555">2'</text><rect x="717" y="407.94" width="11.6" height="0.9" fill="#b4b4b4"/><rect x="725.5" y="420.18" width="3" height="0.6" fill="#999"/><text transform="translate(723.6 405.34) rotate(-90)" font-size="6" fill="#555">3'</text><rect x="717" y="432.22" width="11.6" height="0.9" fill="#b4b4b4"/><rect x="725.5" y="444.46" width="3" height="0.6" fill="#999"/><text transform="translate(723.6 429.62) rotate(-90)" font-size="6" fill="#555">4'</text><rect x="717" y="456.50" width="11.6" height="0.9" fill="#b4b4b4"/><rect x="725.5" y="468.74" width="3" height="0.6" fill="#999"/><text transform="translate(723.6 453.90) rotate(-90)" font-size="6" fill="#555">5'</text><rect x="717" y="480.78" width="11.6" height="0.9" fill="#b4b4b4"/><rect x="725.5" y="493.02" width="3" height="0.6" fill="#999"/><text transform="translate(723.6 478.18) rotate(-90)" font-size="6" fill="#555">6'</text><rect x="717" y="505.06" width="11.6" height="0.9" fill="#b4b4b4"/><rect x="725.5" y="517.30" width="3" height="0.6" fill="#999"/><text transform="translate(723.6 502.46) rotate(-90)" font-size="6" fill="#555">7'</text><rect x="717" y="529.34" width="11.6" height="0.9" fill="#b4b4b4"/><rect x="725.5" y="541.58" width="3" height="0.6" fill="#999"/><text transform="translate(723.6 526.74) rotate(-90)" font-size="6" fill="#555">8'</text><rect x="717" y="553.62" width="11.6" height="0.9" fill="#b4b4b4"/><rect x="725.5" y="565.86" width="3" height="0.6" fill="#999"/><text transform="translate(723.6 551.02) rotate(-90)" font-size="6" fill="#555">9'</text><rect x="717" y="577.90" width="11.6" height="0.9" fill="#b4b4b4"/><rect x="725.5" y="590.14" width="3" height="0.6" fill="#999"/><text transform="translate(723.6 575.30) rotate(-90)" font-size="6" fill="#555">10'</text><rect x="717" y="602.18" width="11.6" height="0.9" fill="#b4b4b4"/><rect x="725.5" y="614.42" width="3" height="0.6" fill="#999"/><text transform="translate(723.6 599.58) rotate(-90)" font-size="6" fill="#555">11'</text><rect x="717" y="626.46" width="11.6" height="0.9" fill="#b4b4b4"/><rect x="725.5" y="638.70" width="3" height="0.6" fill="#999"/><text transform="translate(723.6 623.86) rotate(-90)" font-size="6" fill="#555">12'</text><rect x="717" y="650.74" width="11.6" height="0.9" fill="#b4b4b4"/><rect x="725.5" y="662.98" width="3" height="0.6" fill="#999"/><text transform="translate(723.6 648.14) rotate(-90)" font-size="6" fill="#555">13'</text><rect x="717" y="675.02" width="11.6" height="0.9" fill="#b4b4b4"/><rect x="725.5" y="687.26" width="3" height="0.6" fill="#999"/><text transform="translate(723.6 672.42) rotate(-90)" font-size="6" fill="#555">14'</text><rect x="717" y="699.30" width="11.6" height="0.9" fill="#b4b4b4"/><rect x="725.5" y="711.54" width="3" height="0.6" fill="#999"/><text transform="translate(723.6 696.70) rotate(-90)" font-size="6" fill="#555">15'</text><rect x="717" y="723.58" width="11.6" height="0.9" fill="#b4b4b4"/><rect x="725.5" y="735.82" width="3" height="0.6" fill="#999"/><text transform="translate(723.6 720.98) rotate(-90)" font-size="6" fill="#555">16'</text>
<rect x="731.4" y="319.6" width="667" height="10.8" fill="#f2f2f2"/>
<rect x="731.4" y="329.8" width="667" height="0.9" fill="#9a9a9a"/>
<rect x="731.4" y="330.7" width="667" height="4.2" fill="#eef0f2"/>
<rect x="730.95" y="319.8" width="0.9" height="10.5" fill="#a8a8a8"/><rect x="743.24" y="327" width="0.6" height="3" fill="#999"/><text x="733.60" y="326.8" font-size="6" fill="#555">0'</text><rect x="755.23" y="319.8" width="0.9" height="10.5" fill="#a8a8a8"/><rect x="767.52" y="327" width="0.6" height="3" fill="#999"/><text x="757.88" y="326.8" font-size="6" fill="#555">1'</text><rect x="779.51" y="319.8" width="0.9" height="10.5" fill="#a8a8a8"/><rect x="791.80" y="327" width="0.6" height="3" fill="#999"/><text x="782.16" y="326.8" font-size="6" fill="#555">2'</text><rect x="803.79" y="319.8" width="0.9" height="10.5" fill="#a8a8a8"/><rect x="816.08" y="327" width="0.6" height="3" fill="#999"/><text x="806.44" y="326.8" font-size="6" fill="#555">3'</text><rect x="828.07" y="319.8" width="0.9" height="10.5" fill="#a8a8a8"/><rect x="840.36" y="327" width="0.6" height="3" fill="#999"/><text x="830.72" y="326.8" font-size="6" fill="#555">4'</text><rect x="852.35" y="319.8" width="0.9" height="10.5" fill="#a8a8a8"/><rect x="864.64" y="327" width="0.6" height="3" fill="#999"/><text x="855.00" y="326.8" font-size="6" fill="#555">5'</text><rect x="876.63" y="319.8" width="0.9" height="10.5" fill="#a8a8a8"/><rect x="888.92" y="327" width="0.6" height="3" fill="#999"/><text x="879.28" y="326.8" font-size="6" fill="#555">6'</text><rect x="900.91" y="319.8" width="0.9" height="10.5" fill="#a8a8a8"/><rect x="913.20" y="327" width="0.6" height="3" fill="#999"/><text x="903.56" y="326.8" font-size="6" fill="#555">7'</text><rect x="925.19" y="319.8" width="0.9" height="10.5" fill="#a8a8a8"/><rect x="937.48" y="327" width="0.6" height="3" fill="#999"/><text x="927.84" y="326.8" font-size="6" fill="#555">8'</text><rect x="949.47" y="319.8" width="0.9" height="10.5" fill="#a8a8a8"/><rect x="961.76" y="327" width="0.6" height="3" fill="#999"/><text x="952.12" y="326.8" font-size="6" fill="#555">9'</text><rect x="973.75" y="319.8" width="0.9" height="10.5" fill="#a8a8a8"/><rect x="986.04" y="327" width="0.6" height="3" fill="#999"/><text x="976.40" y="326.8" font-size="6" fill="#555">10'</text><rect x="998.03" y="319.8" width="0.9" height="10.5" fill="#a8a8a8"/><rect x="1010.32" y="327" width="0.6" height="3" fill="#999"/><text x="1000.68" y="326.8" font-size="6" fill="#555">11'</text><rect x="1022.31" y="319.8" width="0.9" height="10.5" fill="#a8a8a8"/><rect x="1034.60" y="327" width="0.6" height="3" fill="#999"/><text x="1024.96" y="326.8" font-size="6" fill="#555">12'</text><rect x="1046.59" y="319.8" width="0.9" height="10.5" fill="#a8a8a8"/><rect x="1058.88" y="327" width="0.6" height="3" fill="#999"/><text x="1049.24" y="326.8" font-size="6" fill="#555">13'</text><rect x="1070.87" y="319.8" width="0.9" height="10.5" fill="#a8a8a8"/><rect x="1083.16" y="327" width="0.6" height="3" fill="#999"/><text x="1073.52" y="326.8" font-size="6" fill="#555">14'</text><rect x="1095.15" y="319.8" width="0.9" height="10.5" fill="#a8a8a8"/><rect x="1107.44" y="327" width="0.6" height="3" fill="#999"/><text x="1097.80" y="326.8" font-size="6" fill="#555">15'</text><rect x="1119.43" y="319.8" width="0.9" height="10.5" fill="#a8a8a8"/><rect x="1131.72" y="327" width="0.6" height="3" fill="#999"/><text x="1122.08" y="326.8" font-size="6" fill="#555">16'</text><rect x="1143.71" y="319.8" width="0.9" height="10.5" fill="#a8a8a8"/><rect x="1156.00" y="327" width="0.6" height="3" fill="#999"/><text x="1146.36" y="326.8" font-size="6" fill="#555">17'</text><rect x="1167.99" y="319.8" width="0.9" height="10.5" fill="#a8a8a8"/><rect x="1180.28" y="327" width="0.6" height="3" fill="#999"/><text x="1170.64" y="326.8" font-size="6" fill="#555">18'</text><rect x="1192.27" y="319.8" width="0.9" height="10.5" fill="#a8a8a8"/><rect x="1204.56" y="327" width="0.6" height="3" fill="#999"/><text x="1194.92" y="326.8" font-size="6" fill="#555">19'</text><rect x="1216.55" y="319.8" width="0.9" height="10.5" fill="#a8a8a8"/><rect x="1228.84" y="327" width="0.6" height="3" fill="#999"/><text x="1219.20" y="326.8" font-size="6" fill="#555">20'</text><rect x="1240.83" y="319.8" width="0.9" height="10.5" fill="#a8a8a8"/><rect x="1253.12" y="327" width="0.6" height="3" fill="#999"/><text x="1243.48" y="326.8" font-size="6" fill="#555">21'</text><rect x="1265.11" y="319.8" width="0.9" height="10.5" fill="#a8a8a8"/><rect x="1277.40" y="327" width="0.6" height="3" fill="#999"/><text x="1267.76" y="326.8" font-size="6" fill="#555">22'</text><rect x="1289.39" y="319.8" width="0.9" height="10.5" fill="#a8a8a8"/><rect x="1301.68" y="327" width="0.6" height="3" fill="#999"/><text x="1292.04" y="326.8" font-size="6" fill="#555">23'</text><rect x="1313.67" y="319.8" width="0.9" height="10.5" fill="#a8a8a8"/><rect x="1325.96" y="327" width="0.6" height="3" fill="#999"/><text x="1316.32" y="326.8" font-size="6" fill="#555">24'</text><rect x="1337.95" y="319.8" width="0.9" height="10.5" fill="#a8a8a8"/><rect x="1350.24" y="327" width="0.6" height="3" fill="#999"/><text x="1340.60" y="326.8" font-size="6" fill="#555">25'</text><rect x="1362.23" y="319.8" width="0.9" height="10.5" fill="#a8a8a8"/><rect x="1374.52" y="327" width="0.6" height="3" fill="#999"/><text x="1364.88" y="326.8" font-size="6" fill="#555">26'</text><rect x="1386.51" y="319.8" width="0.9" height="10.5" fill="#a8a8a8"/><rect x="1398.80" y="327" width="0.6" height="3" fill="#999"/><text x="1389.16" y="326.8" font-size="6" fill="#555">27'</text>
<rect x="733" y="626.5" width="665" height="105" fill="url(#pav)"/>
<rect x="738" y="620.5" width="628" height="6.5" fill="#fbfbfb"/>
<path d="M745.0 626v-3h5v3" fill="none" stroke="#b8b8b8" stroke-width="0.8"/><path d="M757.1 626v-3h5v3" fill="none" stroke="#b8b8b8" stroke-width="0.8"/><path d="M769.3 626v-3h5v3" fill="none" stroke="#b8b8b8" stroke-width="0.8"/><path d="M781.4 626v-3h5v3" fill="none" stroke="#b8b8b8" stroke-width="0.8"/><path d="M793.6 626v-3h5v3" fill="none" stroke="#b8b8b8" stroke-width="0.8"/><path d="M805.7 626v-3h5v3" fill="none" stroke="#b8b8b8" stroke-width="0.8"/><path d="M817.8 626v-3h5v3" fill="none" stroke="#b8b8b8" stroke-width="0.8"/><path d="M830.0 626v-3h5v3" fill="none" stroke="#b8b8b8" stroke-width="0.8"/><path d="M842.1 626v-3h5v3" fill="none" stroke="#b8b8b8" stroke-width="0.8"/><path d="M854.3 626v-3h5v3" fill="none" stroke="#b8b8b8" stroke-width="0.8"/><path d="M866.4 626v-3h5v3" fill="none" stroke="#b8b8b8" stroke-width="0.8"/><path d="M878.5 626v-3h5v3" fill="none" stroke="#b8b8b8" stroke-width="0.8"/><path d="M890.7 626v-3h5v3" fill="none" stroke="#b8b8b8" stroke-width="0.8"/><path d="M902.8 626v-3h5v3" fill="none" stroke="#b8b8b8" stroke-width="0.8"/><path d="M915.0 626v-3h5v3" fill="none" stroke="#b8b8b8" stroke-width="0.8"/><path d="M927.1 626v-3h5v3" fill="none" stroke="#b8b8b8" stroke-width="0.8"/><path d="M939.2 626v-3h5v3" fill="none" stroke="#b8b8b8" stroke-width="0.8"/><path d="M951.4 626v-3h5v3" fill="none" stroke="#b8b8b8" stroke-width="0.8"/><path d="M963.5 626v-3h5v3" fill="none" stroke="#b8b8b8" stroke-width="0.8"/><path d="M975.7 626v-3h5v3" fill="none" stroke="#b8b8b8" stroke-width="0.8"/><path d="M987.8 626v-3h5v3" fill="none" stroke="#b8b8b8" stroke-width="0.8"/><path d="M999.9 626v-3h5v3" fill="none" stroke="#b8b8b8" stroke-width="0.8"/><path d="M1012.1 626v-3h5v3" fill="none" stroke="#b8b8b8" stroke-width="0.8"/><path d="M1024.2 626v-3h5v3" fill="none" stroke="#b8b8b8" stroke-width="0.8"/><path d="M1036.4 626v-3h5v3" fill="none" stroke="#b8b8b8" stroke-width="0.8"/><path d="M1048.5 626v-3h5v3" fill="none" stroke="#b8b8b8" stroke-width="0.8"/><path d="M1060.6 626v-3h5v3" fill="none" stroke="#b8b8b8" stroke-width="0.8"/><path d="M1072.8 626v-3h5v3" fill="none" stroke="#b8b8b8" stroke-width="0.8"/><path d="M1084.9 626v-3h5v3" fill="none" stroke="#b8b8b8" stroke-width="0.8"/><path d="M1097.1 626v-3h5v3" fill="none" stroke="#b8b8b8" stroke-width="0.8"/><path d="M1109.2 626v-3h5v3" fill="none" stroke="#b8b8b8" stroke-width="0.8"/><path d="M1121.3 626v-3h5v3" fill="none" stroke="#b8b8b8" stroke-width="0.8"/><path d="M1133.5 626v-3h5v3" fill="none" stroke="#b8b8b8" stroke-width="0.8"/><path d="M1145.6 626v-3h5v3" fill="none" stroke="#b8b8b8" stroke-width="0.8"/><path d="M1157.8 626v-3h5v3" fill="none" stroke="#b8b8b8" stroke-width="0.8"/><path d="M1169.9 626v-3h5v3" fill="none" stroke="#b8b8b8" stroke-width="0.8"/><path d="M1182.0 626v-3h5v3" fill="none" stroke="#b8b8b8" stroke-width="0.8"/><path d="M1194.2 626v-3h5v3" fill="none" stroke="#b8b8b8" stroke-width="0.8"/><path d="M1206.3 626v-3h5v3" fill="none" stroke="#b8b8b8" stroke-width="0.8"/><path d="M1218.5 626v-3h5v3" fill="none" stroke="#b8b8b8" stroke-width="0.8"/><path d="M1230.6 626v-3h5v3" fill="none" stroke="#b8b8b8" stroke-width="0.8"/><path d="M1242.7 626v-3h5v3" fill="none" stroke="#b8b8b8" stroke-width="0.8"/><path d="M1254.9 626v-3h5v3" fill="none" stroke="#b8b8b8" stroke-width="0.8"/><path d="M1267.0 626v-3h5v3" fill="none" stroke="#b8b8b8" stroke-width="0.8"/><path d="M1279.2 626v-3h5v3" fill="none" stroke="#b8b8b8" stroke-width="0.8"/><path d="M1291.3 626v-3h5v3" fill="none" stroke="#b8b8b8" stroke-width="0.8"/><path d="M1303.4 626v-3h5v3" fill="none" stroke="#b8b8b8" stroke-width="0.8"/><path d="M1315.6 626v-3h5v3" fill="none" stroke="#b8b8b8" stroke-width="0.8"/><path d="M1327.7 626v-3h5v3" fill="none" stroke="#b8b8b8" stroke-width="0.8"/><path d="M1339.9 626v-3h5v3" fill="none" stroke="#b8b8b8" stroke-width="0.8"/><rect x="836.0" y="621.5" width="6.5" height="7" fill="#fff" stroke="#aaa" stroke-width="0.6"/><rect x="940.0" y="621.5" width="6.5" height="7" fill="#fff" stroke="#aaa" stroke-width="0.6"/><rect x="1043.6" y="621.5" width="6.5" height="7" fill="#fff" stroke="#aaa" stroke-width="0.6"/><rect x="1147.0" y="621.5" width="6.5" height="7" fill="#fff" stroke="#aaa" stroke-width="0.6"/><rect x="1252.0" y="621.5" width="6.5" height="7" fill="#fff" stroke="#aaa" stroke-width="0.6"/><rect x="1356.0" y="621.5" width="6.5" height="7" fill="#fff" stroke="#aaa" stroke-width="0.6"/>
<rect x="731.3" y="337.2" width="666" height="1.8" fill="#86603a"/>
<rect x="744.50" y="334.7" width="6.3" height="2.8" fill="#86603a"/><rect x="755.70" y="334.7" width="6.3" height="2.8" fill="#86603a"/><rect x="766.90" y="334.7" width="6.3" height="2.8" fill="#86603a"/><rect x="778.10" y="334.7" width="6.3" height="2.8" fill="#86603a"/><rect x="789.30" y="334.7" width="6.3" height="2.8" fill="#86603a"/><rect x="800.50" y="334.7" width="6.3" height="2.8" fill="#86603a"/><rect x="811.70" y="334.7" width="6.3" height="2.8" fill="#86603a"/><rect x="822.90" y="334.7" width="6.3" height="2.8" fill="#86603a"/><rect x="849.00" y="334.7" width="6.3" height="2.8" fill="#86603a"/><rect x="860.20" y="334.7" width="6.3" height="2.8" fill="#86603a"/><rect x="871.40" y="334.7" width="6.3" height="2.8" fill="#86603a"/><rect x="882.60" y="334.7" width="6.3" height="2.8" fill="#86603a"/><rect x="893.80" y="334.7" width="6.3" height="2.8" fill="#86603a"/><rect x="905.00" y="334.7" width="6.3" height="2.8" fill="#86603a"/><rect x="916.20" y="334.7" width="6.3" height="2.8" fill="#86603a"/><rect x="927.40" y="334.7" width="6.3" height="2.8" fill="#86603a"/><rect x="953.00" y="334.7" width="6.3" height="2.8" fill="#86603a"/><rect x="964.20" y="334.7" width="6.3" height="2.8" fill="#86603a"/><rect x="975.40" y="334.7" width="6.3" height="2.8" fill="#86603a"/><rect x="986.60" y="334.7" width="6.3" height="2.8" fill="#86603a"/><rect x="997.80" y="334.7" width="6.3" height="2.8" fill="#86603a"/><rect x="1009.00" y="334.7" width="6.3" height="2.8" fill="#86603a"/><rect x="1020.20" y="334.7" width="6.3" height="2.8" fill="#86603a"/><rect x="1031.40" y="334.7" width="6.3" height="2.8" fill="#86603a"/><rect x="1057.00" y="334.7" width="6.3" height="2.8" fill="#86603a"/><rect x="1068.20" y="334.7" width="6.3" height="2.8" fill="#86603a"/><rect x="1079.40" y="334.7" width="6.3" height="2.8" fill="#86603a"/><rect x="1090.60" y="334.7" width="6.3" height="2.8" fill="#86603a"/><rect x="1101.80" y="334.7" width="6.3" height="2.8" fill="#86603a"/><rect x="1113.00" y="334.7" width="6.3" height="2.8" fill="#86603a"/><rect x="1124.20" y="334.7" width="6.3" height="2.8" fill="#86603a"/><rect x="1135.40" y="334.7" width="6.3" height="2.8" fill="#86603a"/><rect x="1161.00" y="334.7" width="6.3" height="2.8" fill="#86603a"/><rect x="1172.20" y="334.7" width="6.3" height="2.8" fill="#86603a"/><rect x="1183.40" y="334.7" width="6.3" height="2.8" fill="#86603a"/><rect x="1194.60" y="334.7" width="6.3" height="2.8" fill="#86603a"/><rect x="1205.80" y="334.7" width="6.3" height="2.8" fill="#86603a"/><rect x="1217.00" y="334.7" width="6.3" height="2.8" fill="#86603a"/><rect x="1228.20" y="334.7" width="6.3" height="2.8" fill="#86603a"/><rect x="1239.40" y="334.7" width="6.3" height="2.8" fill="#86603a"/><rect x="1265.00" y="334.7" width="6.3" height="2.8" fill="#86603a"/><rect x="1276.20" y="334.7" width="6.3" height="2.8" fill="#86603a"/><rect x="1287.40" y="334.7" width="6.3" height="2.8" fill="#86603a"/><rect x="1298.60" y="334.7" width="6.3" height="2.8" fill="#86603a"/><rect x="1309.80" y="334.7" width="6.3" height="2.8" fill="#86603a"/><rect x="1321.00" y="334.7" width="6.3" height="2.8" fill="#86603a"/><rect x="1332.20" y="334.7" width="6.3" height="2.8" fill="#86603a"/><rect x="1343.40" y="334.7" width="6.3" height="2.8" fill="#86603a"/><rect x="1369.00" y="334.7" width="6.3" height="2.8" fill="#86603a"/><rect x="1380.20" y="334.7" width="6.3" height="2.8" fill="#86603a"/><rect x="1391.40" y="334.7" width="6.3" height="2.8" fill="#86603a"/>
<rect x="733" y="335" width="5" height="287" fill="#7e5c3c"/>
<rect x="735.7" y="345.00" width="2.3" height="4.6" fill="#111"/><rect x="735.7" y="355.75" width="2.3" height="4.6" fill="#111"/><rect x="735.7" y="366.50" width="2.3" height="4.6" fill="#111"/><rect x="735.7" y="377.25" width="2.3" height="4.6" fill="#111"/><rect x="735.7" y="388.00" width="2.3" height="4.6" fill="#111"/><rect x="735.7" y="398.75" width="2.3" height="4.6" fill="#111"/><rect x="735.7" y="409.50" width="2.3" height="4.6" fill="#111"/><rect x="735.7" y="420.25" width="2.3" height="4.6" fill="#111"/><rect x="735.7" y="431.00" width="2.3" height="4.6" fill="#111"/><rect x="735.7" y="441.75" width="2.3" height="4.6" fill="#111"/><rect x="735.7" y="452.50" width="2.3" height="4.6" fill="#111"/><rect x="735.7" y="463.25" width="2.3" height="4.6" fill="#111"/><rect x="735.7" y="474.00" width="2.3" height="4.6" fill="#111"/><rect x="735.7" y="484.75" width="2.3" height="4.6" fill="#111"/><rect x="735.7" y="495.50" width="2.3" height="4.6" fill="#111"/><rect x="735.7" y="506.25" width="2.3" height="4.6" fill="#111"/><rect x="735.7" y="517.00" width="2.3" height="4.6" fill="#111"/><rect x="735.7" y="527.75" width="2.3" height="4.6" fill="#111"/><rect x="735.7" y="538.50" width="2.3" height="4.6" fill="#111"/><rect x="735.7" y="549.25" width="2.3" height="4.6" fill="#111"/><rect x="735.7" y="560.00" width="2.3" height="4.6" fill="#111"/><rect x="735.7" y="570.75" width="2.3" height="4.6" fill="#111"/><rect x="735.7" y="581.50" width="2.3" height="4.6" fill="#111"/><rect x="735.7" y="592.25" width="2.3" height="4.6" fill="#111"/><rect x="735.7" y="603.00" width="2.3" height="4.6" fill="#111"/><rect x="735.7" y="613.75" width="2.3" height="4.6" fill="#111"/>
<rect x="750.5" y="338.8" width="317" height="3" fill="#0a0a0a"/>
<rect x="737.7" y="339.5" width="12.8" height="3.3" fill="#f4f4f4" stroke="#888" stroke-width="0.6"/>
<path d="M1067 340.3H1081.2V355" fill="none" stroke="#888" stroke-width="3.6"/><path d="M1067 340.3H1081.2V355" fill="none" stroke="#f4f4f4" stroke-width="2"/>
<rect x="835.3" y="334" width="7.5" height="7.4" fill="#7e5a3a"/>
<rect x="939.3" y="334" width="7.5" height="7.4" fill="#7e5a3a"/>
<rect x="1043.3" y="334" width="7.5" height="7.4" fill="#7e5a3a"/>
<rect x="1147.3" y="334" width="7.5" height="7.4" fill="#7e5a3a"/>
<rect x="1251.3" y="334" width="7.5" height="7.4" fill="#7e5a3a"/>
<rect x="1355.3" y="334" width="7.5" height="7.4" fill="#7e5a3a"/>
<rect x="731.3" y="335" width="6.6" height="7.5" fill="#7e5a3a"/>
<rect x="731.2" y="440.0" width="7" height="6" fill="#7e5a3a"/>
<rect x="731.2" y="543.0" width="7" height="6" fill="#7e5a3a"/>
<rect x="1079" y="355" width="4.5" height="209" fill="#0a0a0a"/>
<rect x="846" y="560" width="237.5" height="3.3" fill="#0a0a0a"/>
<rect x="850" y="559.5" width="9" height="5" rx="1" fill="#e01a1a"/>
<path d="M1079.3 565.5H1082.2L1084.3 576.5V585H1076.8V576.5Z" fill="#e2121c"/><rect x="1078.5" y="562.5" width="4.5" height="3" fill="#1a8a4a"/>
<rect x="748.3" y="356.3" width="304.9" height="5" fill="#7b5a3e"/><rect x="748.3" y="477.0" width="304.9" height="5.5" fill="#7b5a3e"/><rect x="748.3" y="355.8" width="5.5" height="127.69999999999999" fill="#7b5a3e"/><rect x="1047.7" y="355.8" width="5.5" height="127.69999999999999" fill="#7b5a3e"/><rect x="746.5" y="354.8" width="10" height="10" fill="#76563c" stroke="#5e4430" stroke-width="0.5"/><rect x="1045" y="354.8" width="10" height="10" fill="#76563c" stroke="#5e4430" stroke-width="0.5"/><rect x="746.5" y="474.5" width="10" height="10" fill="#76563c" stroke="#5e4430" stroke-width="0.5"/><rect x="1045" y="474.5" width="10" height="10" fill="#76563c" stroke="#5e4430" stroke-width="0.5"/>
<rect x="1111.6" y="357.3" width="279.6" height="5" fill="#7b5a3e"/><rect x="1111.6" y="464.5" width="279.6" height="5.5" fill="#7b5a3e"/><rect x="1111.6" y="356.8" width="5.5" height="114.19999999999999" fill="#7b5a3e"/><rect x="1385.7" y="356.8" width="5.5" height="114.19999999999999" fill="#7b5a3e"/><rect x="1109.8" y="355.8" width="10" height="10" fill="#76563c" stroke="#5e4430" stroke-width="0.5"/><rect x="1383" y="355.8" width="10" height="10" fill="#76563c" stroke="#5e4430" stroke-width="0.5"/><rect x="1109.8" y="462" width="10" height="10" fill="#76563c" stroke="#5e4430" stroke-width="0.5"/><rect x="1383" y="462" width="10" height="10" fill="#76563c" stroke="#5e4430" stroke-width="0.5"/>
<rect x="750.3" y="505.0" width="301.6" height="5" fill="#7b5a3e"/><rect x="750.3" y="604.5" width="301.6" height="5.5" fill="#7b5a3e"/><rect x="750.3" y="504.5" width="5.5" height="106.5" fill="#7b5a3e"/><rect x="1046.4" y="504.5" width="5.5" height="106.5" fill="#7b5a3e"/><rect x="748.5" y="503.5" width="10" height="10" fill="#76563c" stroke="#5e4430" stroke-width="0.5"/><rect x="1043.7" y="503.5" width="10" height="10" fill="#76563c" stroke="#5e4430" stroke-width="0.5"/><rect x="748.5" y="602" width="10" height="10" fill="#76563c" stroke="#5e4430" stroke-width="0.5"/><rect x="1043.7" y="602" width="10" height="10" fill="#76563c" stroke="#5e4430" stroke-width="0.5"/>
<rect x="1112.6" y="503.0" width="278.6" height="5" fill="#7b5a3e"/><rect x="1112.6" y="603.0" width="278.6" height="5.5" fill="#7b5a3e"/><rect x="1112.6" y="502.5" width="5.5" height="107.0" fill="#7b5a3e"/><rect x="1385.7" y="502.5" width="5.5" height="107.0" fill="#7b5a3e"/><rect x="1110.8" y="501.5" width="10" height="10" fill="#76563c" stroke="#5e4430" stroke-width="0.5"/><rect x="1383" y="501.5" width="10" height="10" fill="#76563c" stroke="#5e4430" stroke-width="0.5"/><rect x="1110.8" y="600.5" width="10" height="10" fill="#76563c" stroke="#5e4430" stroke-width="0.5"/><rect x="1383" y="600.5" width="10" height="10" fill="#76563c" stroke="#5e4430" stroke-width="0.5"/>
<rect x="753.8" y="356.3" width="286.5" height="116.7" rx="14" fill="#6ee496" opacity="0.7"/>
<rect x="754" y="398" width="286" height="19" fill="#40c870" opacity="0.22"/>
<rect x="738" y="383" width="14" height="2.2" fill="#0a0a0a"/><rect x="738" y="442.5" width="14" height="2.2" fill="#0a0a0a"/>
<path d="M752 443.6H1040" stroke="#1e7a3a" stroke-width="1.6" stroke-dasharray="6 3"/><path d="M754 408H1040" stroke="#2a5a30" stroke-width="1"/>
<use href="#herb" x="760.00" y="410.00" /><use href="#herb" x="771.90" y="410.00" /><use href="#herb" x="783.80" y="410.00" /><use href="#herb" x="795.70" y="410.00" /><use href="#herb" x="807.60" y="410.00" /><use href="#herb" x="819.50" y="410.00" /><use href="#herb" x="831.40" y="410.00" /><use href="#herb" x="843.30" y="410.00" /><use href="#herb" x="855.20" y="410.00" /><use href="#herb" x="867.10" y="410.00" /><use href="#herb" x="879.00" y="410.00" /><use href="#herb" x="890.90" y="410.00" /><use href="#herb" x="902.80" y="410.00" /><use href="#herb" x="914.70" y="410.00" /><use href="#herb" x="926.60" y="410.00" /><use href="#herb" x="938.50" y="410.00" /><use href="#herb" x="950.40" y="410.00" /><use href="#herb" x="962.30" y="410.00" /><use href="#herb" x="974.20" y="410.00" /><use href="#herb" x="986.10" y="410.00" /><use href="#herb" x="998.00" y="410.00" /><use href="#herb" x="1009.90" y="410.00" /><use href="#herb" x="1021.80" y="410.00" /><use href="#herb" x="1033.70" y="410.00" />
<use href="#bok" x="766.70" y="363.50" /><use href="#bok" x="790.70" y="363.50" /><use href="#bok" x="814.70" y="363.50" /><use href="#bok" x="838.70" y="363.50" /><use href="#bok" x="862.70" y="363.50" /><use href="#bok" x="886.70" y="363.50" /><use href="#bok" x="910.70" y="363.50" /><use href="#bok" x="934.70" y="363.50" /><use href="#bok" x="958.70" y="363.50" /><use href="#bok" x="982.70" y="363.50" /><use href="#bok" x="1006.70" y="363.50" /><use href="#bok" x="1030.70" y="363.50" />
<use href="#cab" x="777.00" y="437.00" /><use href="#cab" x="825.20" y="437.00" /><use href="#cab" x="873.40" y="437.00" /><use href="#cab" x="921.60" y="437.00" /><use href="#cab" x="969.80" y="437.00" /><use href="#cab" x="1018.00" y="437.00" />
<rect x="1083" y="383.6" width="29" height="2.4" fill="#0a0a0a"/><rect x="1083" y="433" width="29" height="2.4" fill="#0a0a0a"/>
<rect x="1083" y="383.6" width="5" height="2.4" fill="#1a8a50"/><rect x="1083" y="433" width="5" height="2.4" fill="#1a8a50"/>
<use href="#basil" x="1125.00" y="373.50" /><use href="#basil" x="1136.95" y="373.50" /><use href="#basil" x="1148.90" y="373.50" /><use href="#basil" x="1160.85" y="373.50" /><use href="#basil" x="1172.80" y="373.50" /><use href="#basil" x="1184.75" y="373.50" /><use href="#basil" x="1196.70" y="373.50" /><use href="#basil" x="1208.65" y="373.50" /><use href="#basil" x="1220.60" y="373.50" /><use href="#basil" x="1232.55" y="373.50" /><use href="#basil" x="1244.50" y="373.50" /><use href="#basil" x="1256.45" y="373.50" /><use href="#basil" x="1268.40" y="373.50" /><use href="#basil" x="1280.35" y="373.50" /><use href="#basil" x="1292.30" y="373.50" /><use href="#basil" x="1304.25" y="373.50" /><use href="#basil" x="1316.20" y="373.50" /><use href="#basil" x="1328.15" y="373.50" /><use href="#basil" x="1340.10" y="373.50" /><use href="#basil" x="1352.05" y="373.50" /><use href="#basil" x="1364.00" y="373.50" /><use href="#basil" x="1375.95" y="373.50" />
<rect x="1119" y="382.8" width="253" height="2.8" fill="#0a0a0a"/>
<rect x="1126" y="383" width="1.4" height="2.6" fill="#5ad0e0"/><rect x="1138" y="383" width="1.4" height="2.6" fill="#5ad0e0"/><rect x="1150" y="383" width="1.4" height="2.6" fill="#5ad0e0"/><rect x="1162" y="383" width="1.4" height="2.6" fill="#5ad0e0"/><rect x="1174" y="383" width="1.4" height="2.6" fill="#5ad0e0"/><rect x="1186" y="383" width="1.4" height="2.6" fill="#5ad0e0"/><rect x="1198" y="383" width="1.4" height="2.6" fill="#5ad0e0"/><rect x="1210" y="383" width="1.4" height="2.6" fill="#5ad0e0"/><rect x="1222" y="383" width="1.4" height="2.6" fill="#5ad0e0"/><rect x="1234" y="383" width="1.4" height="2.6" fill="#5ad0e0"/><rect x="1246" y="383" width="1.4" height="2.6" fill="#5ad0e0"/><rect x="1258" y="383" width="1.4" height="2.6" fill="#5ad0e0"/><rect x="1270" y="383" width="1.4" height="2.6" fill="#5ad0e0"/><rect x="1282" y="383" width="1.4" height="2.6" fill="#5ad0e0"/><rect x="1294" y="383" width="1.4" height="2.6" fill="#5ad0e0"/><rect x="1306" y="383" width="1.4" height="2.6" fill="#5ad0e0"/><rect x="1318" y="383" width="1.4" height="2.6" fill="#5ad0e0"/><rect x="1330" y="383" width="1.4" height="2.6" fill="#5ad0e0"/><rect x="1342" y="383" width="1.4" height="2.6" fill="#5ad0e0"/><rect x="1354" y="383" width="1.4" height="2.6" fill="#5ad0e0"/><rect x="1366" y="383" width="1.4" height="2.6" fill="#5ad0e0"/>
<rect x="1366" y="382.5" width="16" height="3.5" fill="#d82a20"/>
<rect x="1123" y="388" width="263" height="46.5" rx="12" fill="#f4e43a" opacity="0.68"/>
<path d="M1119 434H1368" stroke="#8a8a10" stroke-width="2" stroke-dasharray="5 2"/><rect x="1119" y="433" width="11" height="2.2" fill="#0a0a0a"/>
<path d="M1364 434.3L1382 432.5V437Z" fill="#e8501a"/>
<use href="#tom" x="1140.50" y="412.00" /><use href="#tom" x="1178.30" y="412.00" /><use href="#tom" x="1216.10" y="412.00" /><use href="#tom" x="1253.90" y="412.00" /><use href="#tom" x="1291.70" y="412.00" /><use href="#tom" x="1329.50" y="412.00" /><use href="#tom" x="1367.30" y="412.00" />
<rect x="1120.6" y="436.8" width="259.5" height="22.5" rx="10" fill="#9a9a9a" opacity="0.4"/>
<use href="#nas" x="1132.00" y="447.00" /><use href="#nas" x="1158.00" y="447.00" /><use href="#nas" x="1184.00" y="447.00" /><use href="#nas" x="1210.00" y="447.00" /><use href="#nas" x="1236.00" y="447.00" /><use href="#nas" x="1262.00" y="447.00" /><use href="#nas" x="1288.00" y="447.00" /><use href="#nas" x="1314.00" y="447.00" /><use href="#nas" x="1340.00" y="447.00" /><use href="#nas" x="1366.00" y="447.00" />
<rect x="738" y="523" width="110" height="2.4" fill="#0a0a0a"/><rect x="738" y="591.5" width="112" height="2.4" fill="#0a0a0a"/>
<rect x="751" y="536" width="95" height="44" rx="6" fill="#3ccfd8" opacity="0.62"/>
<rect x="757.7" y="508.6" width="82" height="96.2" rx="8" fill="#18c8d2" opacity="0.66"/>
<rect x="780" y="536.5" width="44" height="44" fill="#fbfbf6" opacity="0.85"/>
<g fill="none" stroke="#a88a68"><rect x="772.5" y="529.5" width="59" height="58.5" stroke-width="2"/><rect x="780.3" y="537" width="43.5" height="43.5" stroke-width="1.6"/><rect x="787.5" y="544.5" width="29" height="29" stroke-width="1.4"/><rect x="793.5" y="550.5" width="17" height="17" stroke-width="1.2"/></g>
<rect x="797" y="553.5" width="11" height="11" fill="#a88a68"/>
<path d="M772.5 529.5L831.5 588M831.5 529.5L772.5 588" stroke="#a88a68" stroke-width="1.8"/>
<use href="#bean" x="764.00" y="521.00" /><use href="#bean" x="764.00" y="592.00" /><use href="#bean" x="775.50" y="521.00" /><use href="#bean" x="775.50" y="592.00" /><use href="#bean" x="787.00" y="521.00" /><use href="#bean" x="787.00" y="592.00" /><use href="#bean" x="798.50" y="521.00" /><use href="#bean" x="798.50" y="592.00" /><use href="#bean" x="810.00" y="521.00" /><use href="#bean" x="810.00" y="592.00" /><use href="#bean" x="821.50" y="521.00" /><use href="#bean" x="821.50" y="592.00" /><use href="#bean" x="833.00" y="521.00" /><use href="#bean" x="833.00" y="592.00" /><use href="#bean" x="764.00" y="535.00" /><use href="#bean" x="833.00" y="535.00" /><use href="#bean" x="764.00" y="546.50" /><use href="#bean" x="833.00" y="546.50" /><use href="#bean" x="764.00" y="558.00" /><use href="#bean" x="833.00" y="558.00" /><use href="#bean" x="764.00" y="569.50" /><use href="#bean" x="833.00" y="569.50" /><use href="#bean" x="764.00" y="581.00" /><use href="#bean" x="833.00" y="581.00" />
<rect x="846.6" y="510" width="201" height="50.7" fill="#dde3ea"/>
<ellipse cx="947" cy="533" rx="99" ry="15.5" fill="#eef1c0"/>
<path d="M859.0 524.5C859.0 522.8 871.0 522.8 871.0 524.5L870.5 537.5C867.0 539.5 862.0 539.5 859.5 537.5Z" fill="#5aa46a"/><path d="M867.0 535L874.0 533.5L873.0 538L859.0 546Z" fill="#d84a60"/><ellipse cx="855.8" cy="534.8" rx="4.3" ry="4.6" fill="#ecd060"/><rect x="863.0" y="521" width="3" height="3" fill="#6aa87a"/><path d="M882.8 524.5C882.8 522.8 894.8 522.8 894.8 524.5L894.3 537.5C890.8 539.5 885.8 539.5 883.3 537.5Z" fill="#5aa46a"/><path d="M890.8 535L897.8 533.5L896.8 538L882.8 546Z" fill="#d84a60"/><ellipse cx="879.5999999999999" cy="534.8" rx="4.3" ry="4.6" fill="#ecd060"/><rect x="886.8" y="521" width="3" height="3" fill="#6aa87a"/><path d="M906.6 524.5C906.6 522.8 918.6 522.8 918.6 524.5L918.1 537.5C914.6 539.5 909.6 539.5 907.1 537.5Z" fill="#5aa46a"/><path d="M914.6 535L921.6 533.5L920.6 538L906.6 546Z" fill="#d84a60"/><ellipse cx="903.4" cy="534.8" rx="4.3" ry="4.6" fill="#ecd060"/><rect x="910.6" y="521" width="3" height="3" fill="#6aa87a"/><path d="M930.4 524.5C930.4 522.8 942.4 522.8 942.4 524.5L941.9 537.5C938.4 539.5 933.4 539.5 930.9 537.5Z" fill="#5aa46a"/><path d="M938.4 535L945.4 533.5L944.4 538L930.4 546Z" fill="#d84a60"/><ellipse cx="927.1999999999999" cy="534.8" rx="4.3" ry="4.6" fill="#ecd060"/><rect x="934.4" y="521" width="3" height="3" fill="#6aa87a"/><path d="M954.2 524.5C954.2 522.8 966.2 522.8 966.2 524.5L965.7 537.5C962.2 539.5 957.2 539.5 954.7 537.5Z" fill="#5aa46a"/><path d="M962.2 535L969.2 533.5L968.2 538L954.2 546Z" fill="#d84a60"/><ellipse cx="951.0" cy="534.8" rx="4.3" ry="4.6" fill="#ecd060"/><rect x="958.2" y="521" width="3" height="3" fill="#6aa87a"/><path d="M978.0 524.5C978.0 522.8 990.0 522.8 990.0 524.5L989.5 537.5C986.0 539.5 981.0 539.5 978.5 537.5Z" fill="#5aa46a"/><path d="M986.0 535L993.0 533.5L992.0 538L978.0 546Z" fill="#d84a60"/><ellipse cx="974.8" cy="534.8" rx="4.3" ry="4.6" fill="#ecd060"/><rect x="982.0" y="521" width="3" height="3" fill="#6aa87a"/><path d="M1001.8 524.5C1001.8 522.8 1013.8 522.8 1013.8 524.5L1013.3 537.5C1009.8 539.5 1004.8 539.5 1002.3 537.5Z" fill="#5aa46a"/><path d="M1009.8 535L1016.8 533.5L1015.8 538L1001.8 546Z" fill="#d84a60"/><ellipse cx="998.5999999999999" cy="534.8" rx="4.3" ry="4.6" fill="#ecd060"/><rect x="1005.8" y="521" width="3" height="3" fill="#6aa87a"/><path d="M1025.6 524.5C1025.6 522.8 1037.6 522.8 1037.6 524.5L1037.1 537.5C1033.6 539.5 1028.6 539.5 1026.1 537.5Z" fill="#5aa46a"/><path d="M1033.6 535L1040.6 533.5L1039.6 538L1025.6 546Z" fill="#d84a60"/><ellipse cx="1022.3999999999999" cy="534.8" rx="4.3" ry="4.6" fill="#ecd060"/><rect x="1029.6" y="521" width="3" height="3" fill="#6aa87a"/>
<rect x="845.8000000000001" y="510.5" width="1.8" height="51" fill="#9aa0a6"/>
<rect x="894.9000000000001" y="510.5" width="1.8" height="51" fill="#9aa0a6"/>
<rect x="943.2" y="510.5" width="1.8" height="51" fill="#9aa0a6"/>
<rect x="991.2" y="510.5" width="1.8" height="51" fill="#9aa0a6"/>
<rect x="1040.2" y="510.5" width="1.8" height="51" fill="#9aa0a6"/>
<rect x="850" y="563" width="195" height="26" fill="#f8cc98"/>
<use href="#car" x="853.00" y="562.50" /><use href="#car" x="861.06" y="562.50" /><use href="#car" x="869.12" y="562.50" /><use href="#car" x="877.18" y="562.50" /><use href="#car" x="885.24" y="562.50" /><use href="#car" x="893.30" y="562.50" /><use href="#car" x="901.36" y="562.50" /><use href="#car" x="909.42" y="562.50" /><use href="#car" x="917.48" y="562.50" /><use href="#car" x="925.54" y="562.50" /><use href="#car" x="933.60" y="562.50" /><use href="#car" x="941.66" y="562.50" /><use href="#car" x="949.72" y="562.50" /><use href="#car" x="957.78" y="562.50" /><use href="#car" x="965.84" y="562.50" /><use href="#car" x="973.90" y="562.50" /><use href="#car" x="981.96" y="562.50" /><use href="#car" x="990.02" y="562.50" /><use href="#car" x="998.08" y="562.50" /><use href="#car" x="1006.14" y="562.50" /><use href="#car" x="1014.20" y="562.50" /><use href="#car" x="1022.26" y="562.50" /><use href="#car" x="1030.32" y="562.50" /><use href="#car" x="1038.38" y="562.50" /><use href="#car" x="1046.44" y="562.50" /><use href="#car" x="853.00" y="575.50" /><use href="#car" x="861.06" y="575.50" /><use href="#car" x="869.12" y="575.50" /><use href="#car" x="877.18" y="575.50" /><use href="#car" x="885.24" y="575.50" /><use href="#car" x="893.30" y="575.50" /><use href="#car" x="901.36" y="575.50" /><use href="#car" x="909.42" y="575.50" /><use href="#car" x="917.48" y="575.50" /><use href="#car" x="925.54" y="575.50" /><use href="#car" x="933.60" y="575.50" /><use href="#car" x="941.66" y="575.50" /><use href="#car" x="949.72" y="575.50" /><use href="#car" x="957.78" y="575.50" /><use href="#car" x="965.84" y="575.50" /><use href="#car" x="973.90" y="575.50" /><use href="#car" x="981.96" y="575.50" /><use href="#car" x="990.02" y="575.50" /><use href="#car" x="998.08" y="575.50" /><use href="#car" x="1006.14" y="575.50" /><use href="#car" x="1014.20" y="575.50" /><use href="#car" x="1022.26" y="575.50" /><use href="#car" x="1030.32" y="575.50" /><use href="#car" x="1038.38" y="575.50" /><use href="#car" x="1046.44" y="575.50" />
<use href="#beet" x="855.00" y="591.00" /><use href="#beet" x="863.06" y="591.00" /><use href="#beet" x="871.12" y="591.00" /><use href="#beet" x="879.18" y="591.00" /><use href="#beet" x="887.24" y="591.00" /><use href="#beet" x="895.30" y="591.00" /><use href="#beet" x="903.36" y="591.00" /><use href="#beet" x="911.42" y="591.00" /><use href="#beet" x="919.48" y="591.00" /><use href="#beet" x="927.54" y="591.00" /><use href="#beet" x="935.60" y="591.00" /><use href="#beet" x="943.66" y="591.00" /><use href="#beet" x="951.72" y="591.00" /><use href="#beet" x="959.78" y="591.00" /><use href="#beet" x="967.84" y="591.00" /><use href="#beet" x="975.90" y="591.00" /><use href="#beet" x="983.96" y="591.00" /><use href="#beet" x="992.02" y="591.00" /><use href="#beet" x="1000.08" y="591.00" /><use href="#beet" x="1008.14" y="591.00" /><use href="#beet" x="1016.20" y="591.00" /><use href="#beet" x="1024.26" y="591.00" /><use href="#beet" x="1032.32" y="591.00" /><use href="#beet" x="1040.38" y="591.00" />
<rect x="748" y="607" width="91" height="4" fill="#0a0a0a"/><path d="M838 607.2H848L856 608.3V610.5L848 611.5H838Z" fill="#e21a1a"/>
<rect x="801" y="609" width="2.6" height="13" fill="#0a0a0a"/><rect x="801" y="609" width="2.6" height="3" fill="#1a8a4a"/>
<path d="M748 608.5H737.3V621" fill="none" stroke="#888" stroke-width="3.4"/><path d="M748 608.5H737.3V621" fill="none" stroke="#f4f4f4" stroke-width="1.8"/>
<rect x="1083" y="532.6" width="35" height="2.4" fill="#0a0a0a"/>
<path d="M1089 533.8H1117" stroke="#5ad0e0" stroke-width="2.4" stroke-dasharray="2 7"/>
<rect x="1117.6" y="503.6" width="265" height="46.4" rx="14" fill="#ff7070" opacity="0.5"/>
<path d="M1118 533.8H1376" stroke="#9a3040" stroke-width="2" stroke-dasharray="6 2.5"/>
<rect x="1375" y="530.8" width="14" height="6.5" fill="#e8202a"/>
<rect x="1118" y="555" width="264.5" height="18.5" rx="8" fill="#28d4de" opacity="0.52"/>
<use href="#flw" x="1126.00" y="564.00" /><use href="#flw" x="1142.30" y="564.00" /><use href="#flw" x="1158.60" y="564.00" /><use href="#flw" x="1174.90" y="564.00" /><use href="#flw" x="1191.20" y="564.00" /><use href="#flw" x="1207.50" y="564.00" /><use href="#flw" x="1223.80" y="564.00" /><use href="#flw" x="1240.10" y="564.00" /><use href="#flw" x="1256.40" y="564.00" /><use href="#flw" x="1272.70" y="564.00" /><use href="#flw" x="1289.00" y="564.00" /><use href="#flw" x="1305.30" y="564.00" /><use href="#flw" x="1321.60" y="564.00" /><use href="#flw" x="1337.90" y="564.00" /><use href="#flw" x="1354.20" y="564.00" /><use href="#flw" x="1370.50" y="564.00" />
<rect x="1124" y="583" width="258" height="12.5" rx="4" fill="#f4a050" opacity="0.55"/>
<use href="#car2" x="1128.00" y="580.00" /><use href="#car2" x="1136.07" y="580.00" /><use href="#car2" x="1144.14" y="580.00" /><use href="#car2" x="1152.21" y="580.00" /><use href="#car2" x="1160.28" y="580.00" /><use href="#car2" x="1168.35" y="580.00" /><use href="#car2" x="1176.42" y="580.00" /><use href="#car2" x="1184.49" y="580.00" /><use href="#car2" x="1192.56" y="580.00" /><use href="#car2" x="1200.63" y="580.00" /><use href="#car2" x="1208.70" y="580.00" /><use href="#car2" x="1216.77" y="580.00" /><use href="#car2" x="1224.84" y="580.00" /><use href="#car2" x="1232.91" y="580.00" /><use href="#car2" x="1240.98" y="580.00" /><use href="#car2" x="1249.05" y="580.00" /><use href="#car2" x="1257.12" y="580.00" /><use href="#car2" x="1265.19" y="580.00" /><use href="#car2" x="1273.26" y="580.00" /><use href="#car2" x="1281.33" y="580.00" /><use href="#car2" x="1289.40" y="580.00" /><use href="#car2" x="1297.47" y="580.00" /><use href="#car2" x="1305.54" y="580.00" /><use href="#car2" x="1313.61" y="580.00" /><use href="#car2" x="1321.68" y="580.00" /><use href="#car2" x="1329.75" y="580.00" /><use href="#car2" x="1337.82" y="580.00" /><use href="#car2" x="1345.89" y="580.00" /><use href="#car2" x="1353.96" y="580.00" /><use href="#car2" x="1362.03" y="580.00" /><use href="#car2" x="1370.10" y="580.00" /><use href="#car2" x="1378.17" y="580.00" />
<use href="#cuc" x="1139.00" y="526.00" /><use href="#cuc" x="1194.00" y="526.00" /><use href="#cuc" x="1249.00" y="526.00" /><use href="#cuc" x="1304.00" y="526.00" /><use href="#cuc" x="1359.00" y="526.00" />
<rect x="1118" y="551.4" width="262" height="2.8" fill="#9a7a58"/>
<rect x="1126.8" y="528" width="2.4" height="47" fill="#9a7a58"/><rect x="1129.3" y="543" width="1.8" height="32" fill="#a08060"/><rect x="1157.3" y="528" width="2.4" height="47" fill="#9a7a58"/><rect x="1159.8" y="543" width="1.8" height="32" fill="#a08060"/><rect x="1187.8" y="528" width="2.4" height="47" fill="#9a7a58"/><rect x="1190.3" y="543" width="1.8" height="32" fill="#a08060"/><rect x="1218.3" y="528" width="2.4" height="47" fill="#9a7a58"/><rect x="1220.8" y="543" width="1.8" height="32" fill="#a08060"/><rect x="1248.8" y="528" width="2.4" height="47" fill="#9a7a58"/><rect x="1251.3" y="543" width="1.8" height="32" fill="#a08060"/><rect x="1279.3" y="528" width="2.4" height="47" fill="#9a7a58"/><rect x="1281.8" y="543" width="1.8" height="32" fill="#a08060"/><rect x="1309.8" y="528" width="2.4" height="47" fill="#9a7a58"/><rect x="1312.3" y="543" width="1.8" height="32" fill="#a08060"/><rect x="1340.3" y="528" width="2.4" height="47" fill="#9a7a58"/><rect x="1342.8" y="543" width="1.8" height="32" fill="#a08060"/><rect x="1370.8" y="528" width="2.4" height="47" fill="#9a7a58"/><rect x="1373.3" y="543" width="1.8" height="32" fill="#a08060"/>
<circle cx="809.9" cy="659.6" r="35.8" fill="#e8e0d8" opacity="0.3"/>
<circle cx="807.8" cy="649.7" r="21.5" fill="none" stroke="#384040" stroke-width="1.6" stroke-dasharray="22 3 10 3 30 4"/>
<path d="M806 630L821 638.5" stroke="#e05050" stroke-width="6.5"/>
<circle cx="798.1" cy="646.1" r="2.8" fill="#7e7ad6" stroke="#3a3a7a" stroke-width="0.5"/><circle cx="802.7" cy="648.6" r="2.8" fill="#7e7ad6" stroke="#3a3a7a" stroke-width="0.5"/><circle cx="795.6" cy="652.7" r="2.8" fill="#7e7ad6" stroke="#3a3a7a" stroke-width="0.5"/><circle cx="800.7" cy="652.7" r="2.8" fill="#7e7ad6" stroke="#3a3a7a" stroke-width="0.5"/><circle cx="794" cy="657.8" r="2.8" fill="#7e7ad6" stroke="#3a3a7a" stroke-width="0.5"/><circle cx="799.2" cy="656.8" r="2.8" fill="#7e7ad6" stroke="#3a3a7a" stroke-width="0.5"/><circle cx="803.8" cy="656.3" r="2.8" fill="#7e7ad6" stroke="#3a3a7a" stroke-width="0.5"/><circle cx="803.8" cy="660.9" r="2.8" fill="#7e7ad6" stroke="#3a3a7a" stroke-width="0.5"/><circle cx="794.6" cy="666" r="2.8" fill="#7e7ad6" stroke="#3a3a7a" stroke-width="0.5"/><circle cx="802.2" cy="669.6" r="2.8" fill="#7e7ad6" stroke="#3a3a7a" stroke-width="0.5"/><circle cx="808.9" cy="669.6" r="2.8" fill="#7e7ad6" stroke="#3a3a7a" stroke-width="0.5"/><circle cx="810.4" cy="663" r="2.8" fill="#7e7ad6" stroke="#3a3a7a" stroke-width="0.5"/><circle cx="815" cy="662" r="2.8" fill="#7e7ad6" stroke="#3a3a7a" stroke-width="0.5"/><circle cx="815" cy="657.8" r="2.8" fill="#7e7ad6" stroke="#3a3a7a" stroke-width="0.5"/><circle cx="816" cy="668.1" r="2.8" fill="#7e7ad6" stroke="#3a3a7a" stroke-width="0.5"/><circle cx="798" cy="662" r="2.8" fill="#7e7ad6" stroke="#3a3a7a" stroke-width="0.5"/>
<path d="M805 646C812 643 822 644 829 647C826 652 815 653 805 646Z" fill="#58a458" stroke="#1e3a1e" stroke-width="0.6"/><path d="M809 648C816 650 825 655 829.5 661C822 661 813 656 809 648Z" fill="#62ae5a" stroke="#1e3a1e" stroke-width="0.6"/>
<rect x="791.5" y="672.2" width="37.3" height="14.3" fill="#f2f2f2"/>
<text x="810.2" y="682.2" font-size="6.8" fill="#333" text-anchor="middle">Blueberry</text>
<rect x="733.5" y="620.5" width="6.5" height="12.5" rx="1.5" fill="#f0c020"/><rect x="733" y="625" width="6" height="5" fill="#f4f4f4" stroke="#aaa" stroke-width="0.5"/>
<rect x="733" y="633" width="7" height="25" fill="#1a9ad8"/><path d="M733 640h7M733 650h7" stroke="#0a6aa0" stroke-width="0.8"/>
<path d="M741 640L765 661" stroke="#1aa0e0" stroke-width="9.5" stroke-linecap="round"/><path d="M747 641l-5 6M754 647l-5 6M761 653l-5 6" stroke="#0a6aa0" stroke-width="1"/><path d="M764 657L769 665" stroke="#1a88c8" stroke-width="5"/>
<circle cx="735" cy="665.5" r="6" fill="#fff" stroke="#555" stroke-width="0.8"/><path d="M735 661.5V665.5L737.5 667" stroke="#333" stroke-width="0.6" fill="none"/>
<path d="M729 679.4H742M735.7 674V686" stroke="#4a6ac8" stroke-width="2.4"/><circle cx="735.7" cy="679.4" r="2.8" fill="#3a5ac0"/>
<rect x="935" y="692" width="155.4" height="32.4" fill="#d89078"/>
<rect x="938" y="694" width="149.4" height="28.4" fill="#d8aa9e"/>
<rect x="942" y="695.7" width="139.6" height="24" fill="#8a5a5a"/>
<rect x="945.5" y="697.2" width="134.6" height="22" fill="#a49ca0"/>
<use href="#mint" x="949.00" y="708.00" /><use href="#mint" x="961.00" y="708.00" /><use href="#mint" x="973.00" y="708.00" /><use href="#mint" x="985.00" y="708.00" /><use href="#mint" x="997.00" y="708.00" /><use href="#mint" x="1009.00" y="708.00" /><use href="#mint" x="1021.00" y="708.00" /><use href="#mint" x="1033.00" y="708.00" /><use href="#mint" x="1045.00" y="708.00" /><use href="#mint" x="1057.00" y="708.00" /><use href="#mint" x="1069.00" y="708.00" /><use href="#mint" x="1081.00" y="708.00" />
<rect x="1001.5" y="716" width="20.5" height="15" fill="#f2f2f2"/><text x="1011.7" y="726.6" font-size="6.6" fill="#333" text-anchor="middle">Mint</text>
<rect x="1128" y="690" width="141" height="32" fill="#d4805e"/>
<rect x="1131" y="688" width="132.4" height="38.6" rx="7" fill="#c8b4b0" opacity="0.9"/>
<rect x="1137" y="694" width="123" height="27.5" fill="#928888"/>
<use href="#lav" x="1143.50" y="706.00" /><use href="#lav" x="1179.60" y="706.00" /><use href="#lav" x="1215.60" y="706.00" /><use href="#lav" x="1252.40" y="706.00" />
<rect x="1179.6" y="717.8" width="36" height="13" fill="#f2f2f2"/><text x="1197.6" y="727" font-size="6.6" fill="#333" text-anchor="middle">Lavender</text>
<rect x="1283" y="671.5" width="63" height="53.5" fill="#a2a4a6"/><rect x="1283.5" y="672" width="62" height="52.5" fill="none" stroke="#b8b8b8" stroke-width="0.8"/>
<rect x="1308" y="668.5" width="13" height="59.5" fill="#e6d08a"/><path d="M1312 669V727M1316.5 669V727" stroke="#c8a860" stroke-width="0.6"/>
</g></svg>
</div></body></html>
